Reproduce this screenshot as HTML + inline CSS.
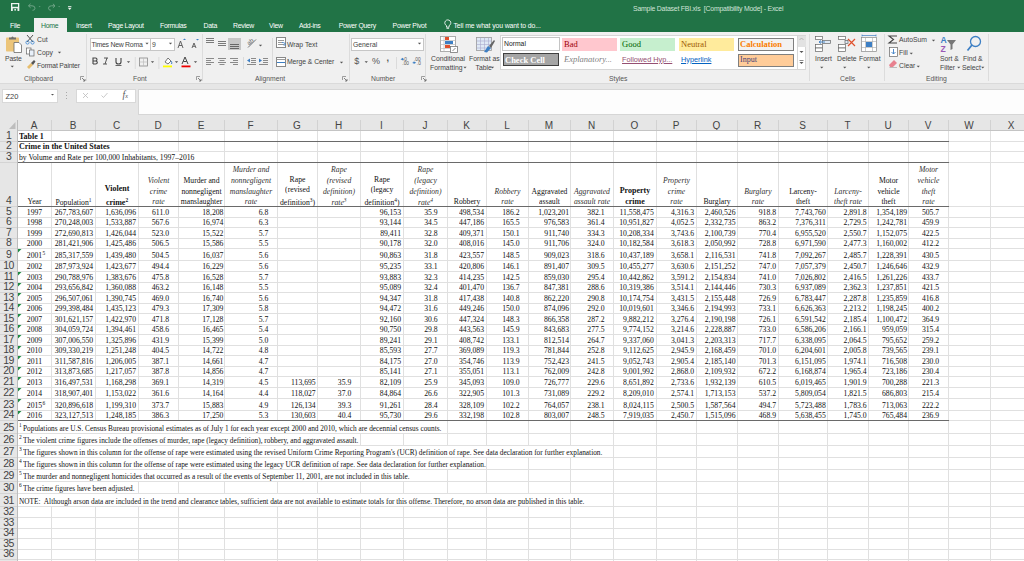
<!DOCTYPE html><html><head><meta charset="utf-8"><style>
html,body{margin:0;padding:0;width:1024px;height:561px;overflow:hidden;background:#fff;position:relative}
*{box-sizing:border-box}
.t{position:absolute;white-space:nowrap;font-family:"Liberation Sans",sans-serif;line-height:1}
.s{font-family:"Liberation Serif",serif}
.ui{font-family:"Liberation Sans",sans-serif;font-size:6.7px;color:#444}
svg{position:absolute;overflow:visible}
</style></head><body>
<div style="position:absolute;left:0px;top:0px;width:1024px;height:32px;background:#217346"></div>
<div style="position:absolute;left:34px;top:18px;width:33px;height:15px;background:#f0f0f0"></div>
<div class="t" style="left:10px;top:23px;font-size:6.9px;color:#ffffff;letter-spacing:-0.28px">File</div>
<div class="t" style="left:41px;top:23px;font-size:6.9px;color:#217346;letter-spacing:-0.28px">Home</div>
<div class="t" style="left:76px;top:23px;font-size:6.9px;color:#ffffff;letter-spacing:-0.28px">Insert</div>
<div class="t" style="left:108px;top:23px;font-size:6.9px;color:#ffffff;letter-spacing:-0.28px">Page Layout</div>
<div class="t" style="left:160px;top:23px;font-size:6.9px;color:#ffffff;letter-spacing:-0.28px">Formulas</div>
<div class="t" style="left:203.5px;top:23px;font-size:6.9px;color:#ffffff;letter-spacing:-0.28px">Data</div>
<div class="t" style="left:233px;top:23px;font-size:6.9px;color:#ffffff;letter-spacing:-0.28px">Review</div>
<div class="t" style="left:269px;top:23px;font-size:6.9px;color:#ffffff;letter-spacing:-0.28px">View</div>
<div class="t" style="left:299px;top:23px;font-size:6.9px;color:#ffffff;letter-spacing:-0.28px">Add-ins</div>
<div class="t" style="left:338.7px;top:23px;font-size:6.9px;color:#ffffff;letter-spacing:-0.28px">Power Query</div>
<div class="t" style="left:392.6px;top:23px;font-size:6.9px;color:#ffffff;letter-spacing:-0.28px">Power Pivot</div>
<div class="t" style="left:453.5px;top:23px;font-size:6.9px;color:#ffffff;letter-spacing:-0.12px">Tell me what you want to do...</div>
<div class="t" style="left:633px;top:6px;font-size:6.9px;color:#d2e3d8;letter-spacing:-0.21px">Sample Dataset FBI.xls&nbsp; [Compatibility Mode] - Excel</div>
<svg style="left:0;top:0" width="80" height="16">
<rect x="11" y="3" width="8.3" height="8" fill="#eef3f0"/>
<rect x="12.3" y="4.2" width="5.7" height="2.6" fill="#217346"/>
<rect x="12.8" y="8.3" width="4.7" height="2.7" fill="#217346"/>
<rect x="14.4" y="9" width="1.5" height="1.6" fill="#eef3f0"/>
<path d="M28.5 5.8 H32 Q35 5.8 35 8.2 Q35 10.3 32.5 10.3 M28.5 5.8 L30.6 3.8 M28.5 5.8 L30.6 7.8" fill="none" stroke="#6fa487" stroke-width="1"/>
<path d="M38.6 6.3 H40.6 L39.6 7.3 Z" fill="#6fa487"/>
<path d="M55 5.8 H51.5 Q48.5 5.8 48.5 8.2 Q48.5 10.3 51 10.3 M55 5.8 L52.9 3.8 M55 5.8 L52.9 7.8" fill="none" stroke="#6fa487" stroke-width="1"/>
<path d="M58.2 6.3 H60.2 L59.2 7.3 Z" fill="#6fa487"/>
<rect x="68" y="6.2" width="3.4" height="0.8" fill="#f2f2f2"/>
<path d="M67.8 7.8 H71.6 L69.7 9.9 Z" fill="#f2f2f2"/>
</svg>
<div style="position:absolute;left:0px;top:32px;width:1024px;height:51px;background:#f0f0f0"></div>
<div style="position:absolute;left:0px;top:83px;width:1024px;height:1px;background:#dadada"></div>
<div style="position:absolute;left:86px;top:34px;width:1px;height:47px;background:#dcdcdc"></div>
<div style="position:absolute;left:202px;top:34px;width:1px;height:47px;background:#dcdcdc"></div>
<div style="position:absolute;left:348.5px;top:34px;width:1px;height:47px;background:#dcdcdc"></div>
<div style="position:absolute;left:425px;top:34px;width:1px;height:47px;background:#dcdcdc"></div>
<div style="position:absolute;left:808.5px;top:34px;width:1px;height:47px;background:#dcdcdc"></div>
<div style="position:absolute;left:884px;top:34px;width:1px;height:47px;background:#dcdcdc"></div>
<div style="position:absolute;left:988px;top:34px;width:1px;height:47px;background:#dcdcdc"></div>
<div class="t" style="left:24px;top:75.5px;font-size:6.8px;color:#555">Clipboard</div>
<div class="t" style="left:133px;top:75.5px;font-size:6.8px;color:#555">Font</div>
<div class="t" style="left:255px;top:75.5px;font-size:6.8px;color:#555">Alignment</div>
<div class="t" style="left:371px;top:75.5px;font-size:6.8px;color:#555">Number</div>
<div class="t" style="left:609px;top:75.5px;font-size:6.8px;color:#555">Styles</div>
<div class="t" style="left:840px;top:75.5px;font-size:6.8px;color:#555">Cells</div>
<div class="t" style="left:926px;top:75.5px;font-size:6.8px;color:#555">Editing</div>
<svg style="left:80px;top:76px" width="6" height="6"><path d="M0.5 0.5 H4 M0.5 0.5 V4" stroke="#888" stroke-width="0.8" fill="none"/><path d="M2 2 L5 5 M5 3 V5 H3" stroke="#666" stroke-width="0.8" fill="none"/></svg>
<svg style="left:196px;top:76px" width="6" height="6"><path d="M0.5 0.5 H4 M0.5 0.5 V4" stroke="#888" stroke-width="0.8" fill="none"/><path d="M2 2 L5 5 M5 3 V5 H3" stroke="#666" stroke-width="0.8" fill="none"/></svg>
<svg style="left:342px;top:76px" width="6" height="6"><path d="M0.5 0.5 H4 M0.5 0.5 V4" stroke="#888" stroke-width="0.8" fill="none"/><path d="M2 2 L5 5 M5 3 V5 H3" stroke="#666" stroke-width="0.8" fill="none"/></svg>
<svg style="left:421px;top:76px" width="6" height="6"><path d="M0.5 0.5 H4 M0.5 0.5 V4" stroke="#888" stroke-width="0.8" fill="none"/><path d="M2 2 L5 5 M5 3 V5 H3" stroke="#666" stroke-width="0.8" fill="none"/></svg>
<svg style="left:0;top:32px" width="90" height="50">
<rect x="6" y="5.5" width="13" height="14" fill="#ecc57a" rx="0.8"/>
<path d="M9 7.5 V5.5 H11.3 Q12.5 3.5 13.7 5.5 H16 V7.5 Z" fill="#707070"/>
<path d="M14 10.5 H19 L21.5 13 V20.5 H14 Z" fill="#fff" stroke="#6b6b6b" stroke-width="0.8"/>
<path d="M27 3 L33 10 M33 3 L27 10" stroke="#555" stroke-width="1"/>
<circle cx="27.5" cy="10.5" r="1.6" fill="none" stroke="#4a8fd6" stroke-width="0.9"/>
<circle cx="32.5" cy="10.5" r="1.6" fill="none" stroke="#4a8fd6" stroke-width="0.9"/>
<rect x="26.5" y="16" width="4.5" height="6" fill="#fff" stroke="#666" stroke-width="0.7"/>
<rect x="29.5" y="18" width="4.5" height="6" fill="#e8f0fa" stroke="#666" stroke-width="0.7"/>
<path d="M27 35 L31 31 L33 33 L29 37 Z" fill="#e6bd6e"/>
<path d="M31 31 L34 28 L35.5 29.5 L33 33" fill="#555"/>
<path d="M57.90 19.70 L61.10 19.70 L59.50 21.50 Z" fill="#555"/>
<path d="M10.65 33.70 L13.85 33.70 L12.25 35.50 Z" fill="#555"/>
</svg>
<div class="t" style="left:5px;top:56px;font-size:6.8px;color:#444;letter-spacing:-0.15px">Paste</div>
<div class="t" style="left:37px;top:37px;font-size:6.8px;color:#444">Cut</div>
<div class="t" style="left:37px;top:50px;font-size:6.8px;color:#444">Copy</div>
<div class="t" style="left:37px;top:63px;font-size:6.8px;color:#444;letter-spacing:-0.15px">Format Painter</div>
<div style="position:absolute;left:89.5px;top:38px;width:61px;height:12.5px;background:#fff;border:1px solid #c6c6c6"></div>
<div style="position:absolute;left:150px;top:38px;width:24.5px;height:12.5px;background:#fff;border:1px solid #c6c6c6"></div>
<div class="t" style="left:91.5px;top:41.8px;font-size:6.9px;color:#444;letter-spacing:-0.25px">Times New Roma</div>
<div class="t" style="left:152px;top:41.8px;font-size:6.9px;color:#444">9</div>
<svg style="left:0;top:32px" width="210" height="50">
<path d="M145.40 10.70 L148.60 10.70 L147.00 12.50 Z" fill="#555"/>
<path d="M168.90 10.70 L172.10 10.70 L170.50 12.50 Z" fill="#555"/>
<path d="M93 32 V26 H95.5 Q97 26 97 27.5 Q97 29 95.5 29 H93 M95.5 29 Q97.3 29 97.3 30.5 Q97.3 32 95.5 32 H93" fill="none" stroke="#444" stroke-width="1.1"/>
<path d="M105 32 L107 26 M104 26 H108 M103 32 H107" stroke="#444" stroke-width="0.9"/>
<path d="M116 26 V30 Q116 32 118.5 32 Q121 32 121 30 V26" fill="none" stroke="#444" stroke-width="1.1"/>
<rect x="115.5" y="33" width="6" height="0.8" fill="#444"/>
<path d="M126.90 29.20 L130.10 29.20 L128.50 31.00 Z" fill="#555"/>
<rect x="134.8" y="25" width="0.8" height="12" fill="#d6d6d6"/>
<rect x="139.5" y="26" width="8" height="8" fill="none" stroke="#888" stroke-width="0.8"/>
<path d="M143.5 26 V34 M139.5 30 H147.5" stroke="#bbb" stroke-width="0.7"/>
<path d="M150.90 29.20 L154.10 29.20 L152.50 31.00 Z" fill="#555"/>
<rect x="158.5" y="25" width="0.8" height="12" fill="#d6d6d6"/>
<path d="M165 30 L168 26 L171 29 L168 32 Z" fill="#fff" stroke="#555" stroke-width="0.8"/>
<path d="M171 29 Q172.5 31 171.5 32" fill="none" stroke="#3d7fc4" stroke-width="1"/>
<rect x="163" y="33.5" width="9" height="1.8" fill="#ffff00"/>
<path d="M174.90 29.20 L178.10 29.20 L176.50 31.00 Z" fill="#555"/>
<path d="M182 32 L185 25 L188 32 M183.3 29.5 H186.7" fill="none" stroke="#444" stroke-width="1"/>
<rect x="181.5" y="33.5" width="9" height="1.8" fill="#e00"/>
<path d="M193.90 29.20 L197.10 29.20 L195.50 31.00 Z" fill="#555"/>
<path d="M178 16 L180.5 9 L183 16 M179 13.5 H182" fill="none" stroke="#555" stroke-width="0.9"/>
<path d="M183 8 L184.5 6.5 L186 8 Z" fill="#3d7fc4"/>
<path d="M192 16 L194 11 L196 16 M192.8 14.3 H195.2" fill="none" stroke="#555" stroke-width="0.9"/>
<path d="M196 7 L199 7 L197.5 8.5 Z" fill="#3d7fc4"/>
</svg>
<svg style="left:0;top:32px" width="350" height="50">
<g stroke="#7a7a7a" stroke-width="1">
<path d="M206 6.5 H214 M206 8.5 H214 M206 10.5 H214"/>
<path d="M218 9.5 H226 M218 11.5 H226 M218 13.5 H226"/>
</g>
<rect x="228" y="6" width="13" height="12" fill="#c6c6c6"/>
<path d="M230 12.5 H239 M230 14.5 H239 M230 16.5 H239" stroke="#666" stroke-width="1"/>
<path d="M248 15.5 L256 7.5" stroke="#666" stroke-width="0.9" fill="none"/>
<text x="247" y="12" font-family="Liberation Sans" font-size="6" fill="#666" transform="rotate(-40 250 10)">ab</text>
<path d="M258.9 12.7 L262.1 12.7 L260.5 14.5 Z" fill="#555"/>
<g stroke="#8a8a8a" stroke-width="1">
<path d="M206 26.5 H214 M206 28.5 H211 M206 30.5 H214 M206 32.5 H211"/>
<path d="M218 26.5 H226 M219.5 28.5 H224.5 M218 30.5 H226 M219.5 32.5 H224.5"/>
<path d="M230 26.5 H238 M233 28.5 H238 M230 30.5 H238 M233 32.5 H238"/>
</g>
<rect x="243" y="25" width="1" height="12" fill="#dadada"/>
<path d="M251 26.5 H256 M251 28.5 H256 M251 30.5 H256 M247 32.5 H256" stroke="#8a8a8a" stroke-width="1"/>
<path d="M247 28.5 L250 26.5 L250 30.5 Z" fill="#3d7fc4"/>
<path d="M263 26.5 H268 M263 28.5 H268 M263 30.5 H268 M259 32.5 H268" stroke="#8a8a8a" stroke-width="1"/>
<path d="M262 28.5 L259 26.5 L259 30.5 Z" fill="#3d7fc4"/>
<rect x="272" y="6" width="1" height="32" fill="#dadada"/>
<rect x="276.5" y="5.5" width="9" height="10" fill="#fff" stroke="#888" stroke-width="1"/>
<path d="M278 8.5 H284 M278 10.5 H282 M278 12.5 H284" stroke="#999" stroke-width="1"/>
<path d="M282 10.5 Q286 10.5 285 13 L283.5 13" stroke="#3d7fc4" fill="none" stroke-width="0.9"/>
<rect x="276.5" y="25.5" width="9" height="9" fill="#fff" stroke="#888" stroke-width="1"/>
<path d="M277 30.5 H285" stroke="#3d7fc4" stroke-width="1"/>
<path d="M276.5 27.5 H285.5" stroke="#999" stroke-width="1"/>
<path d="M339.9 29.7 L343.1 29.7 L341.5 31.5 Z" fill="#555"/>
</svg>
<div class="t" style="left:287px;top:41.5px;font-size:6.8px;color:#444">Wrap Text</div>
<div class="t" style="left:287px;top:58.5px;font-size:6.8px;color:#444;letter-spacing:-0.05px">Merge &amp; Center</div>
<div style="position:absolute;left:351px;top:38px;width:73px;height:12.5px;background:#fff;border:1px solid #c6c6c6"></div>
<div class="t" style="left:353px;top:41.7px;font-size:6.8px;color:#444">General</div>
<svg style="left:0;top:32px" width="430" height="50">
<path d="M417.90 10.70 L421.10 10.70 L419.50 12.50 Z" fill="#555"/>
<path d="M364.65 29.20 L367.85 29.20 L366.25 31.00 Z" fill="#555"/>
<rect x="396" y="25" width="0.8" height="12" fill="#d6d6d6"/>
</svg>
<div class="t" style="left:354.3px;top:56.9px;font-size:9px;color:#555">$</div>
<div class="t" style="left:372px;top:57px;font-size:9px;color:#555">%</div>
<div class="t" style="left:386.5px;top:54px;font-size:9px;color:#555;font-weight:bold">,</div>
<svg style="left:0;top:0" width="430" height="80">
<g font-family="Liberation Sans" font-size="4.8" fill="#555">
<text x="403" y="60.5">.0</text><text x="402.3" y="64.8">.00</text>
<text x="414" y="60.5">.00</text><text x="416.8" y="64.8">.0</text>
</g>
<path d="M400.5 59.2 L403 57.8 V60.6 Z" fill="#3d7fc4"/><rect x="402.5" y="58.7" width="1.5" height="1" fill="#3d7fc4"/>
<path d="M416.2 62.7 L413.7 61.3 V64.1 Z" fill="#3d7fc4"/><rect x="412.7" y="62.2" width="1.5" height="1" fill="#3d7fc4"/>
<path d="M446.5 25.6 A3 3 0 1 1 449.1 25.6 V27.2 H446.5 Z" fill="none" stroke="#fff" stroke-width="0.85"/>
<rect x="446.5" y="27.9" width="2.6" height="0.8" fill="#fff"/>
</svg>
<svg style="left:0;top:32px" width="520" height="50">
<rect x="440.5" y="4.5" width="15" height="15" fill="#fff" stroke="#999" stroke-width="0.8"/>
<path d="M440.5 8.5 H455.5 M440.5 12.5 H455.5 M440.5 16.5 H455.5 M444 4.5 V19.5" stroke="#bbb" stroke-width="0.7"/>
<rect x="445" y="5" width="4" height="3" fill="#e0502c"/>
<rect x="445" y="9" width="8" height="3" fill="#3d7fc4"/>
<rect x="445" y="13" width="5" height="3" fill="#e0502c"/>
<rect x="450.5" y="14.5" width="7" height="6" fill="#fff" stroke="#777" stroke-width="0.8"/>
<path d="M452.5 19 L455.5 16" stroke="#555" stroke-width="0.7"/>
<rect x="476.5" y="5.5" width="15" height="13" fill="#dfe9f5" stroke="#999" stroke-width="0.8"/>
<path d="M476.5 9 H491.5 M476.5 12.5 H491.5 M476.5 16 H491.5 M480.5 5.5 V18.5 M484.5 5.5 V18.5 M488.5 5.5 V18.5" stroke="#aac" stroke-width="0.6"/>
<path d="M484 20 L488 14 L491 16 L487 20.5 Z" fill="#3d7fc4"/>
<path d="M489 14 L494 8 L495 9 L491 16" fill="#666"/>
<path d="M463.40 34.70 L466.60 34.70 L465.00 36.50 Z" fill="#555"/>
<path d="M490.90 34.70 L494.10 34.70 L492.50 36.50 Z" fill="#555"/>
</svg>
<div class="t" style="left:431px;top:56px;font-size:6.8px;color:#444">Conditional</div>
<div class="t" style="left:430px;top:65px;font-size:6.8px;color:#444">Formatting</div>
<div class="t" style="left:469px;top:56px;font-size:6.8px;color:#444">Format as</div>
<div class="t" style="left:475.5px;top:65px;font-size:6.8px;color:#444">Table</div>
<div style="position:absolute;left:500px;top:35px;width:306px;height:35px;background:#fff;border:1px solid #d6d6d6"></div>
<div style="position:absolute;left:502px;top:37px;width:57.5px;height:14px;background:#fff;border:1px solid #c4c4c4"></div>
<div class="t" style="left:504px;top:39.5px;font-family:'Liberation Serif',serif;font-size:8.5px;color:#222;font-family:'Liberation Sans',sans-serif;font-size:6.8px;top:40.5px">Normal</div>
<div style="position:absolute;left:562px;top:38px;width:55px;height:12.5px;background:#ffc7ce"></div>
<div class="t" style="left:564px;top:39.7px;font-family:'Liberation Serif',serif;font-size:8.5px;color:#9c0006">Bad</div>
<div style="position:absolute;left:620px;top:38px;width:55px;height:12.5px;background:#c6efce"></div>
<div class="t" style="left:622px;top:39.9px;font-family:'Liberation Serif',serif;font-size:8.5px;color:#006100">Good</div>
<div style="position:absolute;left:679px;top:38px;width:55px;height:12.5px;background:#ffeb9c"></div>
<div class="t" style="left:681px;top:40.3px;font-family:'Liberation Serif',serif;font-size:8.5px;color:#9c5700">Neutral</div>
<div style="position:absolute;left:738px;top:38px;width:56px;height:13px;background:#f2f2f2;border:1px solid #7f7f7f"></div>
<div class="t" style="left:740px;top:40.1px;font-family:'Liberation Serif',serif;font-size:8.5px;color:#fa7d00;font-weight:bold">Calculation</div>
<div style="position:absolute;left:503px;top:53px;width:55.5px;height:13px;background:#a5a5a5;border:1.5px solid #3f3f3f"></div>
<div class="t" style="left:505px;top:55.5px;font-family:'Liberation Serif',serif;font-size:8.5px;color:#fff;font-weight:bold">Check Cell</div>
<div style="position:absolute;left:562px;top:53px;width:55px;height:13px;"></div>
<div class="t" style="left:564px;top:54.5px;font-family:'Liberation Serif',serif;font-size:8.5px;color:#7f7f7f;font-style:italic">Explanatory...</div>
<div style="position:absolute;left:620px;top:53px;width:55px;height:13px;"></div>
<div class="t" style="left:622px;top:55.5px;font-family:'Liberation Serif',serif;font-size:8.5px;color:#954f72;text-decoration:underline;font-family:'Liberation Sans',sans-serif;font-size:7.3px">Followed Hyp...</div>
<div style="position:absolute;left:679px;top:53px;width:55px;height:13px;"></div>
<div class="t" style="left:681px;top:55.5px;font-family:'Liberation Serif',serif;font-size:8.5px;color:#0563c1;text-decoration:underline;font-family:'Liberation Sans',sans-serif;font-size:7.3px">Hyperlink</div>
<div style="position:absolute;left:738px;top:54px;width:56px;height:12.5px;background:#ffcc99;border:1px solid #7f7f7f"></div>
<div class="t" style="left:740px;top:56.2px;font-family:'Liberation Serif',serif;font-size:8.5px;color:#3f3f76;font-size:8px">Input</div>
<div style="position:absolute;left:797px;top:35px;width:9px;height:35px;background:#fff;border:1px solid #d6d6d6"></div>
<div style="position:absolute;left:797.5px;top:35.5px;width:8px;height:11px;background:#e2e2e2"></div>
<svg style="left:0;top:32px" width="810" height="50">
<path d="M799.5 8 L801.5 6 L803.5 8" fill="none" stroke="#aaa" stroke-width="0.8"/>
<path d="M799.5 19 L803.5 19 L801.5 21 Z" fill="#555"/>
<path d="M799.5 28.5 H803.5" stroke="#555" stroke-width="0.7"/>
<path d="M799.5 30 L803.5 30 L801.5 32 Z" fill="#555"/>
</svg>
<svg style="left:0;top:32px" width="990" height="50">
<g fill="#fff" stroke="#666" stroke-width="0.7">
<rect x="815.5" y="4.5" width="7" height="3"/><rect x="815.5" y="12.5" width="7" height="3.5"/><rect x="815.5" y="16" width="7" height="3.5"/>
<rect x="822.5" y="8.5" width="8" height="3" fill="#dfe9f5"/>
</g>
<path d="M825 10 H819 M821 8.5 L819 10 L821 11.5" stroke="#3d7fc4" stroke-width="0.9" fill="none"/>
<g fill="#fff" stroke="#666" stroke-width="0.7">
<rect x="838.5" y="4.5" width="7" height="3"/><rect x="838.5" y="12.5" width="7" height="3.5"/><rect x="838.5" y="16" width="7" height="3.5"/>
<rect x="845" y="8.5" width="3" height="3" fill="#dfe9f5"/>
</g>
<path d="M848 7 L855 14 M855 7 L848 14" stroke="#e0502c" stroke-width="1.2"/>
<rect x="861.5" y="5.5" width="15" height="14" fill="#fff" stroke="#888" stroke-width="0.7"/>
<path d="M861.5 9.5 H876.5 M861.5 15.5 H876.5 M865.5 5.5 V19.5 M872.5 5.5 V19.5" stroke="#aaa" stroke-width="0.6"/>
<rect x="866" y="10" width="6" height="5" fill="#3d7fc4"/>
<path d="M862 3.5 H876 M862 2.5 V4.5 M876 2.5 V4.5" stroke="#3d7fc4" stroke-width="0.7"/>
<path d="M820.15 34.70 L823.35 34.70 L821.75 36.50 Z" fill="#555"/>
<path d="M843.15 34.70 L846.35 34.70 L844.75 36.50 Z" fill="#555"/>
<path d="M867.15 34.70 L870.35 34.70 L868.75 36.50 Z" fill="#555"/>
</svg>
<div class="t" style="left:815px;top:56px;font-size:6.8px;color:#444">Insert</div>
<div class="t" style="left:837px;top:56px;font-size:6.8px;color:#444">Delete</div>
<div class="t" style="left:859px;top:56px;font-size:6.8px;color:#444">Format</div>
<svg style="left:0;top:32px" width="1000" height="50">
<path d="M897 4 H889 L893.5 7.5 L889 11 H897" fill="none" stroke="#444" stroke-width="1.1"/>
<path d="M931.90 7.70 L935.10 7.70 L933.50 9.50 Z" fill="#555"/>
<rect x="889.5" y="15.5" width="8" height="9" fill="#fff" stroke="#666" stroke-width="0.7"/>
<path d="M893.5 17 V22 M891.5 20 L893.5 22 L895.5 20" stroke="#3d7fc4" stroke-width="0.9" fill="none"/>
<path d="M909.65 20.70 L912.85 20.70 L911.25 22.50 Z" fill="#555"/>
<path d="M889 33 L894 28 L897 31 L893 35 H890 Z" fill="#e8818f"/>
<path d="M889.5 35.5 H897" stroke="#999" stroke-width="0.6"/>
<path d="M916.65 33.70 L919.85 33.70 L918.25 35.50 Z" fill="#555"/>
<text x="940.5" y="10.8" font-family="Liberation Sans" font-size="8.6" font-weight="bold" fill="#3d7fc4">A</text>
<text x="940.5" y="19.5" font-family="Liberation Sans" font-size="8.6" font-weight="bold" fill="#9b59b6">Z</text>
<path d="M947 8 H956 L952.5 12.5 V17 L950.5 18 V12.5 Z" fill="#777"/>
<circle cx="975.5" cy="9.5" r="5" fill="none" stroke="#3d7fc4" stroke-width="1.3"/>
<path d="M972 13 L967.5 18.5" stroke="#3d7fc4" stroke-width="1.8"/>
<path d="M957.15 34.70 L960.35 34.70 L958.75 36.50 Z" fill="#555"/>
<path d="M981.15 34.70 L984.35 34.70 L982.75 36.50 Z" fill="#555"/>
</svg>
<div class="t" style="left:899px;top:37px;font-size:6.8px;color:#444">AutoSum</div>
<div class="t" style="left:899px;top:50px;font-size:6.8px;color:#444">Fill</div>
<div class="t" style="left:899px;top:62.7px;font-size:6.8px;color:#444">Clear</div>
<div class="t" style="left:940px;top:56px;font-size:6.8px;color:#444">Sort &amp;</div>
<div class="t" style="left:940px;top:65.3px;font-size:6.8px;color:#444">Filter</div>
<div class="t" style="left:963px;top:56px;font-size:6.8px;color:#444">Find &amp;</div>
<div class="t" style="left:962px;top:65.3px;font-size:6.8px;color:#444">Select</div>
<div style="position:absolute;left:0px;top:84px;width:1024px;height:46px;background:#e6e6e6"></div>
<div style="position:absolute;left:2px;top:89px;width:56px;height:14px;background:#fff;border:1px solid #d8d8d8"></div>
<div class="t" style="left:5.5px;top:92.5px;font-size:7.5px;color:#444">Z20</div>
<svg style="left:0;top:84px" width="140" height="30">
<path d="M51 10 L54 10 L52.5 11.6 Z" fill="#555"/>
<path d="M66.5 8 V9 M66.5 11 V12 M66.5 14 V15" stroke="#999" stroke-width="0.8"/>
<path d="M83 9 L88 14 M88 9 L83 14" stroke="#bbb" stroke-width="0.8"/>
<path d="M101.5 11.5 L103.5 13.5 L107.5 9" stroke="#bbb" stroke-width="0.8" fill="none"/>
</svg>
<div style="position:absolute;left:76px;top:89px;width:59.5px;height:14px;background:#fff;border:1px solid #d8d8d8"></div>
<div class="t" style="left:122.5px;top:90.5px;font-family:'Liberation Serif',serif;font-size:9.5px;color:#555"><i>f</i><i style="font-size:6px">x</i></div>
<svg style="left:0;top:84px" width="140" height="30">
<path d="M83 9 L88 14 M88 9 L83 14" stroke="#bbb" stroke-width="0.8"/>
<path d="M101.5 11.5 L103.5 13.5 L107.5 9" stroke="#bbb" stroke-width="0.8" fill="none"/>
</svg>
<div style="position:absolute;left:138px;top:89px;width:890px;height:26px;background:#fdfdfd;border:1px solid #d6d6d6"></div>
<div style="position:absolute;left:17px;top:130px;width:1007px;height:431px;background:#fff"></div>
<svg style="left:0;top:118px" width="18" height="13"><path d="M15.5 4 V11 H9 Z" fill="#bdbdbd"/></svg>
<div class="t" style="left:24.0px;top:121.3px;font-size:10px;color:#444;width:20px;text-align:center">A</div>
<div style="position:absolute;left:17px;top:120px;width:1px;height:10px;background:#d2d2d2"></div>
<div class="t" style="left:63.0px;top:121.3px;font-size:10px;color:#444;width:20px;text-align:center">B</div>
<div style="position:absolute;left:51px;top:120px;width:1px;height:10px;background:#d2d2d2"></div>
<div class="t" style="left:106.5px;top:121.3px;font-size:10px;color:#444;width:20px;text-align:center">C</div>
<div style="position:absolute;left:95px;top:120px;width:1px;height:10px;background:#d2d2d2"></div>
<div class="t" style="left:148.0px;top:121.3px;font-size:10px;color:#444;width:20px;text-align:center">D</div>
<div style="position:absolute;left:138px;top:120px;width:1px;height:10px;background:#d2d2d2"></div>
<div class="t" style="left:191.0px;top:121.3px;font-size:10px;color:#444;width:20px;text-align:center">E</div>
<div style="position:absolute;left:178px;top:120px;width:1px;height:10px;background:#d2d2d2"></div>
<div class="t" style="left:240.5px;top:121.3px;font-size:10px;color:#444;width:20px;text-align:center">F</div>
<div style="position:absolute;left:224px;top:120px;width:1px;height:10px;background:#d2d2d2"></div>
<div class="t" style="left:287.0px;top:121.3px;font-size:10px;color:#444;width:20px;text-align:center">G</div>
<div style="position:absolute;left:277px;top:120px;width:1px;height:10px;background:#d2d2d2"></div>
<div class="t" style="left:328.5px;top:121.3px;font-size:10px;color:#444;width:20px;text-align:center">H</div>
<div style="position:absolute;left:317px;top:120px;width:1px;height:10px;background:#d2d2d2"></div>
<div class="t" style="left:371.5px;top:121.3px;font-size:10px;color:#444;width:20px;text-align:center">I</div>
<div style="position:absolute;left:360px;top:120px;width:1px;height:10px;background:#d2d2d2"></div>
<div class="t" style="left:415.0px;top:121.3px;font-size:10px;color:#444;width:20px;text-align:center">J</div>
<div style="position:absolute;left:403px;top:120px;width:1px;height:10px;background:#d2d2d2"></div>
<div class="t" style="left:456.5px;top:121.3px;font-size:10px;color:#444;width:20px;text-align:center">K</div>
<div style="position:absolute;left:447px;top:120px;width:1px;height:10px;background:#d2d2d2"></div>
<div class="t" style="left:497.0px;top:121.3px;font-size:10px;color:#444;width:20px;text-align:center">L</div>
<div style="position:absolute;left:486px;top:120px;width:1px;height:10px;background:#d2d2d2"></div>
<div class="t" style="left:539.0px;top:121.3px;font-size:10px;color:#444;width:20px;text-align:center">M</div>
<div style="position:absolute;left:528px;top:120px;width:1px;height:10px;background:#d2d2d2"></div>
<div class="t" style="left:581.5px;top:121.3px;font-size:10px;color:#444;width:20px;text-align:center">N</div>
<div style="position:absolute;left:570px;top:120px;width:1px;height:10px;background:#d2d2d2"></div>
<div class="t" style="left:624.5px;top:121.3px;font-size:10px;color:#444;width:20px;text-align:center">O</div>
<div style="position:absolute;left:613px;top:120px;width:1px;height:10px;background:#d2d2d2"></div>
<div class="t" style="left:666.0px;top:121.3px;font-size:10px;color:#444;width:20px;text-align:center">P</div>
<div style="position:absolute;left:656px;top:120px;width:1px;height:10px;background:#d2d2d2"></div>
<div class="t" style="left:706.5px;top:121.3px;font-size:10px;color:#444;width:20px;text-align:center">Q</div>
<div style="position:absolute;left:696px;top:120px;width:1px;height:10px;background:#d2d2d2"></div>
<div class="t" style="left:747.5px;top:121.3px;font-size:10px;color:#444;width:20px;text-align:center">R</div>
<div style="position:absolute;left:737px;top:120px;width:1px;height:10px;background:#d2d2d2"></div>
<div class="t" style="left:792.5px;top:121.3px;font-size:10px;color:#444;width:20px;text-align:center">S</div>
<div style="position:absolute;left:778px;top:120px;width:1px;height:10px;background:#d2d2d2"></div>
<div class="t" style="left:837.5px;top:121.3px;font-size:10px;color:#444;width:20px;text-align:center">T</div>
<div style="position:absolute;left:827px;top:120px;width:1px;height:10px;background:#d2d2d2"></div>
<div class="t" style="left:878.0px;top:121.3px;font-size:10px;color:#444;width:20px;text-align:center">U</div>
<div style="position:absolute;left:868px;top:120px;width:1px;height:10px;background:#d2d2d2"></div>
<div class="t" style="left:918.0px;top:121.3px;font-size:10px;color:#444;width:20px;text-align:center">V</div>
<div style="position:absolute;left:908px;top:120px;width:1px;height:10px;background:#d2d2d2"></div>
<div class="t" style="left:959.0px;top:121.3px;font-size:10px;color:#444;width:20px;text-align:center">W</div>
<div style="position:absolute;left:948px;top:120px;width:1px;height:10px;background:#d2d2d2"></div>
<div class="t" style="left:1001.0px;top:121.3px;font-size:10px;color:#444;width:20px;text-align:center">X</div>
<div style="position:absolute;left:990px;top:120px;width:1px;height:10px;background:#d2d2d2"></div>
<div style="position:absolute;left:0px;top:130px;width:1024px;height:1px;background:#c4c4c4"></div>
<div style="position:absolute;left:0px;top:130px;width:17px;height:431px;background:#e6e6e6"></div>
<div style="position:absolute;left:17px;top:120px;width:1px;height:441px;background:#bcbcbc"></div>
<div class="t" style="left:-1px;top:129.8px;font-size:10.5px;color:#444;width:19px;text-align:center;letter-spacing:-0.7px">1</div>
<div style="position:absolute;left:0px;top:141px;width:17px;height:1px;background:#d4d4d4"></div>
<div class="t" style="left:-1px;top:139.8px;font-size:10.5px;color:#444;width:19px;text-align:center;letter-spacing:-0.7px">2</div>
<div style="position:absolute;left:0px;top:151px;width:17px;height:1px;background:#d4d4d4"></div>
<div class="t" style="left:-1px;top:150.8px;font-size:10.5px;color:#444;width:19px;text-align:center;letter-spacing:-0.7px">3</div>
<div style="position:absolute;left:0px;top:162px;width:17px;height:1px;background:#d4d4d4"></div>
<div class="t" style="left:-1px;top:194.8px;font-size:10.5px;color:#444;width:19px;text-align:center;letter-spacing:-0.7px">4</div>
<div style="position:absolute;left:0px;top:206px;width:17px;height:1px;background:#d4d4d4"></div>
<div class="t" style="left:-1px;top:205.8px;font-size:10.5px;color:#444;width:19px;text-align:center;letter-spacing:-0.7px">5</div>
<div style="position:absolute;left:0px;top:217px;width:17px;height:1px;background:#d4d4d4"></div>
<div class="t" style="left:-1px;top:215.8px;font-size:10.5px;color:#444;width:19px;text-align:center;letter-spacing:-0.7px">6</div>
<div style="position:absolute;left:0px;top:227px;width:17px;height:1px;background:#d4d4d4"></div>
<div class="t" style="left:-1px;top:226.8px;font-size:10.5px;color:#444;width:19px;text-align:center;letter-spacing:-0.7px">7</div>
<div style="position:absolute;left:0px;top:238px;width:17px;height:1px;background:#d4d4d4"></div>
<div class="t" style="left:-1px;top:236.8px;font-size:10.5px;color:#444;width:19px;text-align:center;letter-spacing:-0.7px">8</div>
<div style="position:absolute;left:0px;top:248px;width:17px;height:1px;background:#d4d4d4"></div>
<div class="t" style="left:-1px;top:248.8px;font-size:10.5px;color:#444;width:19px;text-align:center;letter-spacing:-0.7px">9</div>
<div style="position:absolute;left:0px;top:260px;width:17px;height:1px;background:#d4d4d4"></div>
<div class="t" style="left:-1px;top:259.8px;font-size:10.5px;color:#444;width:19px;text-align:center;letter-spacing:-0.7px">10</div>
<div style="position:absolute;left:0px;top:271px;width:17px;height:1px;background:#d4d4d4"></div>
<div class="t" style="left:-1px;top:270.8px;font-size:10.5px;color:#444;width:19px;text-align:center;letter-spacing:-0.7px">11</div>
<div style="position:absolute;left:0px;top:282px;width:17px;height:1px;background:#d4d4d4"></div>
<div class="t" style="left:-1px;top:280.8px;font-size:10.5px;color:#444;width:19px;text-align:center;letter-spacing:-0.7px">12</div>
<div style="position:absolute;left:0px;top:292px;width:17px;height:1px;background:#d4d4d4"></div>
<div class="t" style="left:-1px;top:291.8px;font-size:10.5px;color:#444;width:19px;text-align:center;letter-spacing:-0.7px">13</div>
<div style="position:absolute;left:0px;top:303px;width:17px;height:1px;background:#d4d4d4"></div>
<div class="t" style="left:-1px;top:301.8px;font-size:10.5px;color:#444;width:19px;text-align:center;letter-spacing:-0.7px">14</div>
<div style="position:absolute;left:0px;top:313px;width:17px;height:1px;background:#d4d4d4"></div>
<div class="t" style="left:-1px;top:312.8px;font-size:10.5px;color:#444;width:19px;text-align:center;letter-spacing:-0.7px">15</div>
<div style="position:absolute;left:0px;top:324px;width:17px;height:1px;background:#d4d4d4"></div>
<div class="t" style="left:-1px;top:322.8px;font-size:10.5px;color:#444;width:19px;text-align:center;letter-spacing:-0.7px">16</div>
<div style="position:absolute;left:0px;top:334px;width:17px;height:1px;background:#d4d4d4"></div>
<div class="t" style="left:-1px;top:333.8px;font-size:10.5px;color:#444;width:19px;text-align:center;letter-spacing:-0.7px">17</div>
<div style="position:absolute;left:0px;top:345px;width:17px;height:1px;background:#d4d4d4"></div>
<div class="t" style="left:-1px;top:343.8px;font-size:10.5px;color:#444;width:19px;text-align:center;letter-spacing:-0.7px">18</div>
<div style="position:absolute;left:0px;top:355px;width:17px;height:1px;background:#d4d4d4"></div>
<div class="t" style="left:-1px;top:354.8px;font-size:10.5px;color:#444;width:19px;text-align:center;letter-spacing:-0.7px">19</div>
<div style="position:absolute;left:0px;top:366px;width:17px;height:1px;background:#d4d4d4"></div>
<div class="t" style="left:-1px;top:364.8px;font-size:10.5px;color:#444;width:19px;text-align:center;letter-spacing:-0.7px">20</div>
<div style="position:absolute;left:0px;top:376px;width:17px;height:1px;background:#d4d4d4"></div>
<div class="t" style="left:-1px;top:375.8px;font-size:10.5px;color:#444;width:19px;text-align:center;letter-spacing:-0.7px">21</div>
<div style="position:absolute;left:0px;top:387px;width:17px;height:1px;background:#d4d4d4"></div>
<div class="t" style="left:-1px;top:386.8px;font-size:10.5px;color:#444;width:19px;text-align:center;letter-spacing:-0.7px">22</div>
<div style="position:absolute;left:0px;top:398px;width:17px;height:1px;background:#d4d4d4"></div>
<div class="t" style="left:-1px;top:398.8px;font-size:10.5px;color:#444;width:19px;text-align:center;letter-spacing:-0.7px">23</div>
<div style="position:absolute;left:0px;top:410px;width:17px;height:1px;background:#d4d4d4"></div>
<div class="t" style="left:-1px;top:408.8px;font-size:10.5px;color:#444;width:19px;text-align:center;letter-spacing:-0.7px">24</div>
<div style="position:absolute;left:0px;top:420px;width:17px;height:1px;background:#d4d4d4"></div>
<div class="t" style="left:-1px;top:421.8px;font-size:10.5px;color:#444;width:19px;text-align:center;letter-spacing:-0.7px">25</div>
<div style="position:absolute;left:0px;top:433px;width:17px;height:1px;background:#d4d4d4"></div>
<div class="t" style="left:-1px;top:433.8px;font-size:10.5px;color:#444;width:19px;text-align:center;letter-spacing:-0.7px">26</div>
<div style="position:absolute;left:0px;top:445px;width:17px;height:1px;background:#d4d4d4"></div>
<div class="t" style="left:-1px;top:445.8px;font-size:10.5px;color:#444;width:19px;text-align:center;letter-spacing:-0.7px">27</div>
<div style="position:absolute;left:0px;top:457px;width:17px;height:1px;background:#d4d4d4"></div>
<div class="t" style="left:-1px;top:457.8px;font-size:10.5px;color:#444;width:19px;text-align:center;letter-spacing:-0.7px">28</div>
<div style="position:absolute;left:0px;top:469px;width:17px;height:1px;background:#d4d4d4"></div>
<div class="t" style="left:-1px;top:469.8px;font-size:10.5px;color:#444;width:19px;text-align:center;letter-spacing:-0.7px">29</div>
<div style="position:absolute;left:0px;top:481px;width:17px;height:1px;background:#d4d4d4"></div>
<div class="t" style="left:-1px;top:481.8px;font-size:10.5px;color:#444;width:19px;text-align:center;letter-spacing:-0.7px">30</div>
<div style="position:absolute;left:0px;top:493px;width:17px;height:1px;background:#d4d4d4"></div>
<div class="t" style="left:-1px;top:494.8px;font-size:10.5px;color:#444;width:19px;text-align:center;letter-spacing:-0.7px">31</div>
<div style="position:absolute;left:0px;top:506px;width:17px;height:1px;background:#d4d4d4"></div>
<div class="t" style="left:-1px;top:505.8px;font-size:10.5px;color:#444;width:19px;text-align:center;letter-spacing:-0.7px">32</div>
<div style="position:absolute;left:0px;top:517px;width:17px;height:1px;background:#d4d4d4"></div>
<div class="t" style="left:-1px;top:516.8px;font-size:10.5px;color:#444;width:19px;text-align:center;letter-spacing:-0.7px">33</div>
<div style="position:absolute;left:0px;top:528px;width:17px;height:1px;background:#d4d4d4"></div>
<div class="t" style="left:-1px;top:526.8px;font-size:10.5px;color:#444;width:19px;text-align:center;letter-spacing:-0.7px">34</div>
<div style="position:absolute;left:0px;top:538px;width:17px;height:1px;background:#d4d4d4"></div>
<div class="t" style="left:-1px;top:537.8px;font-size:10.5px;color:#444;width:19px;text-align:center;letter-spacing:-0.7px">35</div>
<div style="position:absolute;left:0px;top:549px;width:17px;height:1px;background:#d4d4d4"></div>
<div class="t" style="left:-1px;top:547.8px;font-size:10.5px;color:#444;width:19px;text-align:center;letter-spacing:-0.7px">36</div>
<div style="position:absolute;left:0px;top:559px;width:17px;height:1px;background:#d4d4d4"></div>
<div style="position:absolute;left:18px;top:141px;width:1006px;height:1px;background:#e0e0e0"></div>
<div style="position:absolute;left:18px;top:151px;width:1006px;height:1px;background:#e0e0e0"></div>
<div style="position:absolute;left:18px;top:162px;width:1006px;height:1px;background:#e0e0e0"></div>
<div style="position:absolute;left:18px;top:206px;width:1006px;height:1px;background:#e0e0e0"></div>
<div style="position:absolute;left:18px;top:217px;width:1006px;height:1px;background:#e0e0e0"></div>
<div style="position:absolute;left:18px;top:227px;width:1006px;height:1px;background:#e0e0e0"></div>
<div style="position:absolute;left:18px;top:238px;width:1006px;height:1px;background:#e0e0e0"></div>
<div style="position:absolute;left:18px;top:248px;width:1006px;height:1px;background:#e0e0e0"></div>
<div style="position:absolute;left:18px;top:260px;width:1006px;height:1px;background:#e0e0e0"></div>
<div style="position:absolute;left:18px;top:271px;width:1006px;height:1px;background:#e0e0e0"></div>
<div style="position:absolute;left:18px;top:282px;width:1006px;height:1px;background:#e0e0e0"></div>
<div style="position:absolute;left:18px;top:292px;width:1006px;height:1px;background:#e0e0e0"></div>
<div style="position:absolute;left:18px;top:303px;width:1006px;height:1px;background:#e0e0e0"></div>
<div style="position:absolute;left:18px;top:313px;width:1006px;height:1px;background:#e0e0e0"></div>
<div style="position:absolute;left:18px;top:324px;width:1006px;height:1px;background:#e0e0e0"></div>
<div style="position:absolute;left:18px;top:334px;width:1006px;height:1px;background:#e0e0e0"></div>
<div style="position:absolute;left:18px;top:345px;width:1006px;height:1px;background:#e0e0e0"></div>
<div style="position:absolute;left:18px;top:355px;width:1006px;height:1px;background:#e0e0e0"></div>
<div style="position:absolute;left:18px;top:366px;width:1006px;height:1px;background:#e0e0e0"></div>
<div style="position:absolute;left:18px;top:376px;width:1006px;height:1px;background:#e0e0e0"></div>
<div style="position:absolute;left:18px;top:387px;width:1006px;height:1px;background:#e0e0e0"></div>
<div style="position:absolute;left:18px;top:398px;width:1006px;height:1px;background:#e0e0e0"></div>
<div style="position:absolute;left:18px;top:410px;width:1006px;height:1px;background:#e0e0e0"></div>
<div style="position:absolute;left:18px;top:420px;width:1006px;height:1px;background:#e0e0e0"></div>
<div style="position:absolute;left:18px;top:433px;width:1006px;height:1px;background:#e0e0e0"></div>
<div style="position:absolute;left:18px;top:445px;width:1006px;height:1px;background:#e0e0e0"></div>
<div style="position:absolute;left:18px;top:457px;width:1006px;height:1px;background:#e0e0e0"></div>
<div style="position:absolute;left:18px;top:469px;width:1006px;height:1px;background:#e0e0e0"></div>
<div style="position:absolute;left:18px;top:481px;width:1006px;height:1px;background:#e0e0e0"></div>
<div style="position:absolute;left:18px;top:493px;width:1006px;height:1px;background:#e0e0e0"></div>
<div style="position:absolute;left:18px;top:506px;width:1006px;height:1px;background:#e0e0e0"></div>
<div style="position:absolute;left:18px;top:517px;width:1006px;height:1px;background:#e0e0e0"></div>
<div style="position:absolute;left:18px;top:528px;width:1006px;height:1px;background:#e0e0e0"></div>
<div style="position:absolute;left:18px;top:538px;width:1006px;height:1px;background:#e0e0e0"></div>
<div style="position:absolute;left:18px;top:549px;width:1006px;height:1px;background:#e0e0e0"></div>
<div style="position:absolute;left:18px;top:559px;width:1006px;height:1px;background:#e0e0e0"></div>
<div style="position:absolute;left:51px;top:131px;width:1px;height:11px;background:#e0e0e0"></div>
<div style="position:absolute;left:51px;top:151px;width:1px;height:1px;background:#e0e0e0"></div>
<div style="position:absolute;left:51px;top:162px;width:1px;height:259px;background:#e0e0e0"></div>
<div style="position:absolute;left:51px;top:433px;width:1px;height:1px;background:#e0e0e0"></div>
<div style="position:absolute;left:51px;top:445px;width:1px;height:1px;background:#e0e0e0"></div>
<div style="position:absolute;left:51px;top:457px;width:1px;height:1px;background:#e0e0e0"></div>
<div style="position:absolute;left:51px;top:469px;width:1px;height:1px;background:#e0e0e0"></div>
<div style="position:absolute;left:51px;top:481px;width:1px;height:1px;background:#e0e0e0"></div>
<div style="position:absolute;left:51px;top:493px;width:1px;height:1px;background:#e0e0e0"></div>
<div style="position:absolute;left:51px;top:506px;width:1px;height:55px;background:#e0e0e0"></div>
<div style="position:absolute;left:95px;top:131px;width:1px;height:11px;background:#e0e0e0"></div>
<div style="position:absolute;left:95px;top:151px;width:1px;height:1px;background:#e0e0e0"></div>
<div style="position:absolute;left:95px;top:162px;width:1px;height:259px;background:#e0e0e0"></div>
<div style="position:absolute;left:95px;top:433px;width:1px;height:1px;background:#e0e0e0"></div>
<div style="position:absolute;left:95px;top:445px;width:1px;height:1px;background:#e0e0e0"></div>
<div style="position:absolute;left:95px;top:457px;width:1px;height:1px;background:#e0e0e0"></div>
<div style="position:absolute;left:95px;top:469px;width:1px;height:1px;background:#e0e0e0"></div>
<div style="position:absolute;left:95px;top:481px;width:1px;height:1px;background:#e0e0e0"></div>
<div style="position:absolute;left:95px;top:493px;width:1px;height:1px;background:#e0e0e0"></div>
<div style="position:absolute;left:95px;top:506px;width:1px;height:55px;background:#e0e0e0"></div>
<div style="position:absolute;left:138px;top:131px;width:1px;height:21px;background:#e0e0e0"></div>
<div style="position:absolute;left:138px;top:162px;width:1px;height:259px;background:#e0e0e0"></div>
<div style="position:absolute;left:138px;top:433px;width:1px;height:1px;background:#e0e0e0"></div>
<div style="position:absolute;left:138px;top:445px;width:1px;height:1px;background:#e0e0e0"></div>
<div style="position:absolute;left:138px;top:457px;width:1px;height:1px;background:#e0e0e0"></div>
<div style="position:absolute;left:138px;top:469px;width:1px;height:1px;background:#e0e0e0"></div>
<div style="position:absolute;left:138px;top:481px;width:1px;height:13px;background:#e0e0e0"></div>
<div style="position:absolute;left:138px;top:506px;width:1px;height:55px;background:#e0e0e0"></div>
<div style="position:absolute;left:178px;top:131px;width:1px;height:21px;background:#e0e0e0"></div>
<div style="position:absolute;left:178px;top:162px;width:1px;height:259px;background:#e0e0e0"></div>
<div style="position:absolute;left:178px;top:433px;width:1px;height:1px;background:#e0e0e0"></div>
<div style="position:absolute;left:178px;top:445px;width:1px;height:1px;background:#e0e0e0"></div>
<div style="position:absolute;left:178px;top:457px;width:1px;height:1px;background:#e0e0e0"></div>
<div style="position:absolute;left:178px;top:469px;width:1px;height:1px;background:#e0e0e0"></div>
<div style="position:absolute;left:178px;top:481px;width:1px;height:13px;background:#e0e0e0"></div>
<div style="position:absolute;left:178px;top:506px;width:1px;height:55px;background:#e0e0e0"></div>
<div style="position:absolute;left:224px;top:131px;width:1px;height:290px;background:#e0e0e0"></div>
<div style="position:absolute;left:224px;top:433px;width:1px;height:1px;background:#e0e0e0"></div>
<div style="position:absolute;left:224px;top:445px;width:1px;height:1px;background:#e0e0e0"></div>
<div style="position:absolute;left:224px;top:457px;width:1px;height:1px;background:#e0e0e0"></div>
<div style="position:absolute;left:224px;top:469px;width:1px;height:1px;background:#e0e0e0"></div>
<div style="position:absolute;left:224px;top:481px;width:1px;height:13px;background:#e0e0e0"></div>
<div style="position:absolute;left:224px;top:506px;width:1px;height:55px;background:#e0e0e0"></div>
<div style="position:absolute;left:277px;top:131px;width:1px;height:290px;background:#e0e0e0"></div>
<div style="position:absolute;left:277px;top:433px;width:1px;height:1px;background:#e0e0e0"></div>
<div style="position:absolute;left:277px;top:445px;width:1px;height:1px;background:#e0e0e0"></div>
<div style="position:absolute;left:277px;top:457px;width:1px;height:1px;background:#e0e0e0"></div>
<div style="position:absolute;left:277px;top:469px;width:1px;height:1px;background:#e0e0e0"></div>
<div style="position:absolute;left:277px;top:481px;width:1px;height:13px;background:#e0e0e0"></div>
<div style="position:absolute;left:277px;top:506px;width:1px;height:55px;background:#e0e0e0"></div>
<div style="position:absolute;left:317px;top:131px;width:1px;height:290px;background:#e0e0e0"></div>
<div style="position:absolute;left:317px;top:433px;width:1px;height:1px;background:#e0e0e0"></div>
<div style="position:absolute;left:317px;top:445px;width:1px;height:1px;background:#e0e0e0"></div>
<div style="position:absolute;left:317px;top:457px;width:1px;height:1px;background:#e0e0e0"></div>
<div style="position:absolute;left:317px;top:469px;width:1px;height:1px;background:#e0e0e0"></div>
<div style="position:absolute;left:317px;top:481px;width:1px;height:13px;background:#e0e0e0"></div>
<div style="position:absolute;left:317px;top:506px;width:1px;height:55px;background:#e0e0e0"></div>
<div style="position:absolute;left:360px;top:131px;width:1px;height:290px;background:#e0e0e0"></div>
<div style="position:absolute;left:360px;top:433px;width:1px;height:13px;background:#e0e0e0"></div>
<div style="position:absolute;left:360px;top:457px;width:1px;height:1px;background:#e0e0e0"></div>
<div style="position:absolute;left:360px;top:469px;width:1px;height:1px;background:#e0e0e0"></div>
<div style="position:absolute;left:360px;top:481px;width:1px;height:13px;background:#e0e0e0"></div>
<div style="position:absolute;left:360px;top:506px;width:1px;height:55px;background:#e0e0e0"></div>
<div style="position:absolute;left:403px;top:131px;width:1px;height:290px;background:#e0e0e0"></div>
<div style="position:absolute;left:403px;top:433px;width:1px;height:13px;background:#e0e0e0"></div>
<div style="position:absolute;left:403px;top:457px;width:1px;height:1px;background:#e0e0e0"></div>
<div style="position:absolute;left:403px;top:469px;width:1px;height:1px;background:#e0e0e0"></div>
<div style="position:absolute;left:403px;top:481px;width:1px;height:13px;background:#e0e0e0"></div>
<div style="position:absolute;left:403px;top:506px;width:1px;height:55px;background:#e0e0e0"></div>
<div style="position:absolute;left:447px;top:131px;width:1px;height:315px;background:#e0e0e0"></div>
<div style="position:absolute;left:447px;top:457px;width:1px;height:1px;background:#e0e0e0"></div>
<div style="position:absolute;left:447px;top:469px;width:1px;height:25px;background:#e0e0e0"></div>
<div style="position:absolute;left:447px;top:506px;width:1px;height:55px;background:#e0e0e0"></div>
<div style="position:absolute;left:486px;top:131px;width:1px;height:315px;background:#e0e0e0"></div>
<div style="position:absolute;left:486px;top:457px;width:1px;height:37px;background:#e0e0e0"></div>
<div style="position:absolute;left:486px;top:506px;width:1px;height:55px;background:#e0e0e0"></div>
<div style="position:absolute;left:528px;top:131px;width:1px;height:315px;background:#e0e0e0"></div>
<div style="position:absolute;left:528px;top:457px;width:1px;height:37px;background:#e0e0e0"></div>
<div style="position:absolute;left:528px;top:506px;width:1px;height:55px;background:#e0e0e0"></div>
<div style="position:absolute;left:570px;top:131px;width:1px;height:315px;background:#e0e0e0"></div>
<div style="position:absolute;left:570px;top:457px;width:1px;height:37px;background:#e0e0e0"></div>
<div style="position:absolute;left:570px;top:506px;width:1px;height:55px;background:#e0e0e0"></div>
<div style="position:absolute;left:613px;top:131px;width:1px;height:430px;background:#e0e0e0"></div>
<div style="position:absolute;left:656px;top:131px;width:1px;height:430px;background:#e0e0e0"></div>
<div style="position:absolute;left:696px;top:131px;width:1px;height:430px;background:#e0e0e0"></div>
<div style="position:absolute;left:737px;top:131px;width:1px;height:430px;background:#e0e0e0"></div>
<div style="position:absolute;left:778px;top:131px;width:1px;height:430px;background:#e0e0e0"></div>
<div style="position:absolute;left:827px;top:131px;width:1px;height:430px;background:#e0e0e0"></div>
<div style="position:absolute;left:868px;top:131px;width:1px;height:430px;background:#e0e0e0"></div>
<div style="position:absolute;left:908px;top:131px;width:1px;height:430px;background:#e0e0e0"></div>
<div style="position:absolute;left:948px;top:131px;width:1px;height:430px;background:#e0e0e0"></div>
<div style="position:absolute;left:990px;top:131px;width:1px;height:430px;background:#e0e0e0"></div>
<div style="position:absolute;left:18px;top:141px;width:931px;height:1px;background:#6a6a6a"></div>
<div style="position:absolute;left:18px;top:162px;width:931px;height:1px;background:#6a6a6a"></div>
<div style="position:absolute;left:18px;top:206px;width:931px;height:1px;background:#6a6a6a"></div>
<div style="position:absolute;left:18px;top:420px;width:931px;height:1px;background:#6a6a6a"></div>
<div class="t" style="font-family:'Liberation Serif',serif;left:19px;top:133.30px;font-size:8px;transform:scaleY(1.12);transform-origin:0 83.75%;font-weight:bold;color:#111">Table 1</div>
<div class="t" style="font-family:'Liberation Serif',serif;left:19px;top:143.30px;font-size:8px;transform:scaleY(1.12);transform-origin:0 83.75%;font-weight:bold;color:#111">Crime in the United States</div>
<div class="t" style="font-family:'Liberation Serif',serif;left:19px;top:154.05px;font-size:7.7px;transform:scaleY(1.12);transform-origin:0 83.75%;color:#111">by Volume and Rate per 100,000 Inhabitants, 1997&ndash;2016</div>
<div class="t" style="font-family:'Liberation Serif',serif;left:-115.5px;width:300px;text-align:center;top:198.15px;font-size:7.7px;transform:scaleY(1.12);transform-origin:0 83.75%;color:#111">Year</div>
<div class="t" style="font-family:'Liberation Serif',serif;left:-76.5px;width:300px;text-align:center;top:198.15px;font-size:7.7px;transform:scaleY(1.12);transform-origin:0 83.75%;color:#111">Population<span style="font-size:5.4px;vertical-align:3px">1</span></div>
<div class="t" style="font-family:'Liberation Serif',serif;left:-33.0px;width:300px;text-align:center;top:197.90px;font-size:8px;transform:scaleY(1.12);transform-origin:0 83.75%;font-weight:bold;color:#111">crime<span style="font-size:5.4px;vertical-align:3px">2</span></div>
<div class="t" style="font-family:'Liberation Serif',serif;left:-33.0px;width:300px;text-align:center;top:185.00px;font-size:8px;transform:scaleY(1.12);transform-origin:0 83.75%;font-weight:bold;color:#111">Violent</div>
<div class="t" style="font-family:'Liberation Serif',serif;left:8.5px;width:300px;text-align:center;top:198.15px;font-size:7.7px;transform:scaleY(1.12);transform-origin:0 83.75%;font-style:italic;color:#333">rate</div>
<div class="t" style="font-family:'Liberation Serif',serif;left:8.5px;width:300px;text-align:center;top:187.55px;font-size:7.7px;transform:scaleY(1.12);transform-origin:0 83.75%;font-style:italic;color:#333">crime</div>
<div class="t" style="font-family:'Liberation Serif',serif;left:8.5px;width:300px;text-align:center;top:176.95px;font-size:7.7px;transform:scaleY(1.12);transform-origin:0 83.75%;font-style:italic;color:#333">Violent</div>
<div class="t" style="font-family:'Liberation Serif',serif;left:51.5px;width:300px;text-align:center;top:198.15px;font-size:7.7px;transform:scaleY(1.12);transform-origin:0 83.75%;color:#111">manslaughter</div>
<div class="t" style="font-family:'Liberation Serif',serif;left:51.5px;width:300px;text-align:center;top:187.55px;font-size:7.7px;transform:scaleY(1.12);transform-origin:0 83.75%;color:#111">nonnegligent</div>
<div class="t" style="font-family:'Liberation Serif',serif;left:51.5px;width:300px;text-align:center;top:176.95px;font-size:7.7px;transform:scaleY(1.12);transform-origin:0 83.75%;color:#111">Murder and</div>
<div class="t" style="font-family:'Liberation Serif',serif;left:101.0px;width:300px;text-align:center;top:198.15px;font-size:7.7px;transform:scaleY(1.12);transform-origin:0 83.75%;font-style:italic;color:#333">rate</div>
<div class="t" style="font-family:'Liberation Serif',serif;left:101.0px;width:300px;text-align:center;top:187.55px;font-size:7.7px;transform:scaleY(1.12);transform-origin:0 83.75%;font-style:italic;color:#333">manslaughter</div>
<div class="t" style="font-family:'Liberation Serif',serif;left:101.0px;width:300px;text-align:center;top:176.95px;font-size:7.7px;transform:scaleY(1.12);transform-origin:0 83.75%;font-style:italic;color:#333">nonnegligent</div>
<div class="t" style="font-family:'Liberation Serif',serif;left:101.0px;width:300px;text-align:center;top:166.35px;font-size:7.7px;transform:scaleY(1.12);transform-origin:0 83.75%;font-style:italic;color:#333">Murder and</div>
<div class="t" style="font-family:'Liberation Serif',serif;left:147.5px;width:300px;text-align:center;top:198.15px;font-size:7.7px;transform:scaleY(1.12);transform-origin:0 83.75%;color:#111">definition<span style="font-size:5.4px;vertical-align:3px">3</span>)</div>
<div class="t" style="font-family:'Liberation Serif',serif;left:147.5px;width:300px;text-align:center;top:186.35px;font-size:7.7px;transform:scaleY(1.12);transform-origin:0 83.75%;color:#111">(revised</div>
<div class="t" style="font-family:'Liberation Serif',serif;left:147.5px;width:300px;text-align:center;top:175.75px;font-size:7.7px;transform:scaleY(1.12);transform-origin:0 83.75%;color:#111">Rape</div>
<div class="t" style="font-family:'Liberation Serif',serif;left:189.0px;width:300px;text-align:center;top:198.15px;font-size:7.7px;transform:scaleY(1.12);transform-origin:0 83.75%;font-style:italic;color:#333">rate<span style="font-size:5.4px;vertical-align:3px">3</span></div>
<div class="t" style="font-family:'Liberation Serif',serif;left:189.0px;width:300px;text-align:center;top:187.55px;font-size:7.7px;transform:scaleY(1.12);transform-origin:0 83.75%;font-style:italic;color:#333">definition)</div>
<div class="t" style="font-family:'Liberation Serif',serif;left:189.0px;width:300px;text-align:center;top:176.95px;font-size:7.7px;transform:scaleY(1.12);transform-origin:0 83.75%;font-style:italic;color:#333">(revised</div>
<div class="t" style="font-family:'Liberation Serif',serif;left:189.0px;width:300px;text-align:center;top:166.35px;font-size:7.7px;transform:scaleY(1.12);transform-origin:0 83.75%;font-style:italic;color:#333">Rape</div>
<div class="t" style="font-family:'Liberation Serif',serif;left:232.0px;width:300px;text-align:center;top:198.15px;font-size:7.7px;transform:scaleY(1.12);transform-origin:0 83.75%;color:#111">definition<span style="font-size:5.4px;vertical-align:3px">4</span>)</div>
<div class="t" style="font-family:'Liberation Serif',serif;left:232.0px;width:300px;text-align:center;top:186.35px;font-size:7.7px;transform:scaleY(1.12);transform-origin:0 83.75%;color:#111">(legacy</div>
<div class="t" style="font-family:'Liberation Serif',serif;left:232.0px;width:300px;text-align:center;top:175.75px;font-size:7.7px;transform:scaleY(1.12);transform-origin:0 83.75%;color:#111">Rape</div>
<div class="t" style="font-family:'Liberation Serif',serif;left:275.5px;width:300px;text-align:center;top:198.15px;font-size:7.7px;transform:scaleY(1.12);transform-origin:0 83.75%;font-style:italic;color:#333">rate<span style="font-size:5.4px;vertical-align:3px">4</span></div>
<div class="t" style="font-family:'Liberation Serif',serif;left:275.5px;width:300px;text-align:center;top:187.55px;font-size:7.7px;transform:scaleY(1.12);transform-origin:0 83.75%;font-style:italic;color:#333">definition)</div>
<div class="t" style="font-family:'Liberation Serif',serif;left:275.5px;width:300px;text-align:center;top:176.95px;font-size:7.7px;transform:scaleY(1.12);transform-origin:0 83.75%;font-style:italic;color:#333">(legacy</div>
<div class="t" style="font-family:'Liberation Serif',serif;left:275.5px;width:300px;text-align:center;top:166.35px;font-size:7.7px;transform:scaleY(1.12);transform-origin:0 83.75%;font-style:italic;color:#333">Rape</div>
<div class="t" style="font-family:'Liberation Serif',serif;left:317.0px;width:300px;text-align:center;top:198.15px;font-size:7.7px;transform:scaleY(1.12);transform-origin:0 83.75%;color:#111">Robbery</div>
<div class="t" style="font-family:'Liberation Serif',serif;left:357.5px;width:300px;text-align:center;top:198.15px;font-size:7.7px;transform:scaleY(1.12);transform-origin:0 83.75%;font-style:italic;color:#333">rate</div>
<div class="t" style="font-family:'Liberation Serif',serif;left:357.5px;width:300px;text-align:center;top:187.55px;font-size:7.7px;transform:scaleY(1.12);transform-origin:0 83.75%;font-style:italic;color:#333">Robbery</div>
<div class="t" style="font-family:'Liberation Serif',serif;left:399.5px;width:300px;text-align:center;top:198.15px;font-size:7.7px;transform:scaleY(1.12);transform-origin:0 83.75%;color:#111">assault</div>
<div class="t" style="font-family:'Liberation Serif',serif;left:399.5px;width:300px;text-align:center;top:187.55px;font-size:7.7px;transform:scaleY(1.12);transform-origin:0 83.75%;color:#111">Aggravated</div>
<div class="t" style="font-family:'Liberation Serif',serif;left:442.0px;width:300px;text-align:center;top:198.15px;font-size:7.7px;transform:scaleY(1.12);transform-origin:0 83.75%;font-style:italic;color:#333">assault rate</div>
<div class="t" style="font-family:'Liberation Serif',serif;left:442.0px;width:300px;text-align:center;top:187.55px;font-size:7.7px;transform:scaleY(1.12);transform-origin:0 83.75%;font-style:italic;color:#333">Aggravated</div>
<div class="t" style="font-family:'Liberation Serif',serif;left:485.0px;width:300px;text-align:center;top:197.90px;font-size:8px;transform:scaleY(1.12);transform-origin:0 83.75%;font-weight:bold;color:#111">crime</div>
<div class="t" style="font-family:'Liberation Serif',serif;left:485.0px;width:300px;text-align:center;top:187.30px;font-size:8px;transform:scaleY(1.12);transform-origin:0 83.75%;font-weight:bold;color:#111">Property</div>
<div class="t" style="font-family:'Liberation Serif',serif;left:526.5px;width:300px;text-align:center;top:198.15px;font-size:7.7px;transform:scaleY(1.12);transform-origin:0 83.75%;font-style:italic;color:#333">rate</div>
<div class="t" style="font-family:'Liberation Serif',serif;left:526.5px;width:300px;text-align:center;top:187.55px;font-size:7.7px;transform:scaleY(1.12);transform-origin:0 83.75%;font-style:italic;color:#333">crime</div>
<div class="t" style="font-family:'Liberation Serif',serif;left:526.5px;width:300px;text-align:center;top:176.95px;font-size:7.7px;transform:scaleY(1.12);transform-origin:0 83.75%;font-style:italic;color:#333">Property</div>
<div class="t" style="font-family:'Liberation Serif',serif;left:567.0px;width:300px;text-align:center;top:198.15px;font-size:7.7px;transform:scaleY(1.12);transform-origin:0 83.75%;color:#111">Burglary</div>
<div class="t" style="font-family:'Liberation Serif',serif;left:608.0px;width:300px;text-align:center;top:198.15px;font-size:7.7px;transform:scaleY(1.12);transform-origin:0 83.75%;font-style:italic;color:#333">rate</div>
<div class="t" style="font-family:'Liberation Serif',serif;left:608.0px;width:300px;text-align:center;top:187.55px;font-size:7.7px;transform:scaleY(1.12);transform-origin:0 83.75%;font-style:italic;color:#333">Burglary</div>
<div class="t" style="font-family:'Liberation Serif',serif;left:653.0px;width:300px;text-align:center;top:198.15px;font-size:7.7px;transform:scaleY(1.12);transform-origin:0 83.75%;color:#111">theft</div>
<div class="t" style="font-family:'Liberation Serif',serif;left:653.0px;width:300px;text-align:center;top:187.55px;font-size:7.7px;transform:scaleY(1.12);transform-origin:0 83.75%;color:#111">Larceny-</div>
<div class="t" style="font-family:'Liberation Serif',serif;left:698.0px;width:300px;text-align:center;top:198.15px;font-size:7.7px;transform:scaleY(1.12);transform-origin:0 83.75%;font-style:italic;color:#333">theft rate</div>
<div class="t" style="font-family:'Liberation Serif',serif;left:698.0px;width:300px;text-align:center;top:187.55px;font-size:7.7px;transform:scaleY(1.12);transform-origin:0 83.75%;font-style:italic;color:#333">Larceny-</div>
<div class="t" style="font-family:'Liberation Serif',serif;left:738.5px;width:300px;text-align:center;top:198.15px;font-size:7.7px;transform:scaleY(1.12);transform-origin:0 83.75%;color:#111">theft</div>
<div class="t" style="font-family:'Liberation Serif',serif;left:738.5px;width:300px;text-align:center;top:187.55px;font-size:7.7px;transform:scaleY(1.12);transform-origin:0 83.75%;color:#111">vehicle</div>
<div class="t" style="font-family:'Liberation Serif',serif;left:738.5px;width:300px;text-align:center;top:176.95px;font-size:7.7px;transform:scaleY(1.12);transform-origin:0 83.75%;color:#111">Motor</div>
<div class="t" style="font-family:'Liberation Serif',serif;left:778.5px;width:300px;text-align:center;top:198.15px;font-size:7.7px;transform:scaleY(1.12);transform-origin:0 83.75%;font-style:italic;color:#333">rate</div>
<div class="t" style="font-family:'Liberation Serif',serif;left:778.5px;width:300px;text-align:center;top:187.55px;font-size:7.7px;transform:scaleY(1.12);transform-origin:0 83.75%;font-style:italic;color:#333">theft</div>
<div class="t" style="font-family:'Liberation Serif',serif;left:778.5px;width:300px;text-align:center;top:176.95px;font-size:7.7px;transform:scaleY(1.12);transform-origin:0 83.75%;font-style:italic;color:#333">vehicle</div>
<div class="t" style="font-family:'Liberation Serif',serif;left:778.5px;width:300px;text-align:center;top:166.35px;font-size:7.7px;transform:scaleY(1.12);transform-origin:0 83.75%;font-style:italic;color:#333">Motor</div>
<div class="t" style="font-family:'Liberation Serif',serif;left:-115.5px;width:300px;text-align:center;top:209.25px;font-size:7.7px;transform:scaleY(1.12);transform-origin:0 83.75%;color:#111">1997</div>
<div class="t" style="font-family:'Liberation Serif',serif;left:-206.8px;width:300px;text-align:right;top:209.25px;font-size:7.7px;transform:scaleY(1.12);transform-origin:0 83.75%;color:#111">267,783,607</div>
<div class="t" style="font-family:'Liberation Serif',serif;left:-164px;width:300px;text-align:right;top:209.25px;font-size:7.7px;transform:scaleY(1.12);transform-origin:0 83.75%;color:#111">1,636,096</div>
<div class="t" style="font-family:'Liberation Serif',serif;left:-131px;width:300px;text-align:right;top:209.25px;font-size:7.7px;transform:scaleY(1.12);transform-origin:0 83.75%;color:#111">611.0</div>
<div class="t" style="font-family:'Liberation Serif',serif;left:-76.6px;width:300px;text-align:right;top:209.25px;font-size:7.7px;transform:scaleY(1.12);transform-origin:0 83.75%;color:#111">18,208</div>
<div class="t" style="font-family:'Liberation Serif',serif;left:-31.69999999999999px;width:300px;text-align:right;top:209.25px;font-size:7.7px;transform:scaleY(1.12);transform-origin:0 83.75%;color:#111">6.8</div>
<div class="t" style="font-family:'Liberation Serif',serif;left:101px;width:300px;text-align:right;top:209.25px;font-size:7.7px;transform:scaleY(1.12);transform-origin:0 83.75%;color:#111">96,153</div>
<div class="t" style="font-family:'Liberation Serif',serif;left:137.7px;width:300px;text-align:right;top:209.25px;font-size:7.7px;transform:scaleY(1.12);transform-origin:0 83.75%;color:#111">35.9</div>
<div class="t" style="font-family:'Liberation Serif',serif;left:184px;width:300px;text-align:right;top:209.25px;font-size:7.7px;transform:scaleY(1.12);transform-origin:0 83.75%;color:#111">498,534</div>
<div class="t" style="font-family:'Liberation Serif',serif;left:219.5px;width:300px;text-align:right;top:209.25px;font-size:7.7px;transform:scaleY(1.12);transform-origin:0 83.75%;color:#111">186.2</div>
<div class="t" style="font-family:'Liberation Serif',serif;left:269px;width:300px;text-align:right;top:209.25px;font-size:7.7px;transform:scaleY(1.12);transform-origin:0 83.75%;color:#111">1,023,201</div>
<div class="t" style="font-family:'Liberation Serif',serif;left:304.6px;width:300px;text-align:right;top:209.25px;font-size:7.7px;transform:scaleY(1.12);transform-origin:0 83.75%;color:#111">382.1</div>
<div class="t" style="font-family:'Liberation Serif',serif;left:353.79999999999995px;width:300px;text-align:right;top:209.25px;font-size:7.7px;transform:scaleY(1.12);transform-origin:0 83.75%;color:#111">11,558,475</div>
<div class="t" style="font-family:'Liberation Serif',serif;left:394px;width:300px;text-align:right;top:209.25px;font-size:7.7px;transform:scaleY(1.12);transform-origin:0 83.75%;color:#111">4,316.3</div>
<div class="t" style="font-family:'Liberation Serif',serif;left:435.5px;width:300px;text-align:right;top:209.25px;font-size:7.7px;transform:scaleY(1.12);transform-origin:0 83.75%;color:#111">2,460,526</div>
<div class="t" style="font-family:'Liberation Serif',serif;left:476px;width:300px;text-align:right;top:209.25px;font-size:7.7px;transform:scaleY(1.12);transform-origin:0 83.75%;color:#111">918.8</div>
<div class="t" style="font-family:'Liberation Serif',serif;left:525.8px;width:300px;text-align:right;top:209.25px;font-size:7.7px;transform:scaleY(1.12);transform-origin:0 83.75%;color:#111">7,743,760</div>
<div class="t" style="font-family:'Liberation Serif',serif;left:566.6px;width:300px;text-align:right;top:209.25px;font-size:7.7px;transform:scaleY(1.12);transform-origin:0 83.75%;color:#111">2,891.8</div>
<div class="t" style="font-family:'Liberation Serif',serif;left:607px;width:300px;text-align:right;top:209.25px;font-size:7.7px;transform:scaleY(1.12);transform-origin:0 83.75%;color:#111">1,354,189</div>
<div class="t" style="font-family:'Liberation Serif',serif;left:639.2px;width:300px;text-align:right;top:209.25px;font-size:7.7px;transform:scaleY(1.12);transform-origin:0 83.75%;color:#111">505.7</div>
<div class="t" style="font-family:'Liberation Serif',serif;left:-115.5px;width:300px;text-align:center;top:219.25px;font-size:7.7px;transform:scaleY(1.12);transform-origin:0 83.75%;color:#111">1998</div>
<div class="t" style="font-family:'Liberation Serif',serif;left:-206.8px;width:300px;text-align:right;top:219.25px;font-size:7.7px;transform:scaleY(1.12);transform-origin:0 83.75%;color:#111">270,248,003</div>
<div class="t" style="font-family:'Liberation Serif',serif;left:-164px;width:300px;text-align:right;top:219.25px;font-size:7.7px;transform:scaleY(1.12);transform-origin:0 83.75%;color:#111">1,533,887</div>
<div class="t" style="font-family:'Liberation Serif',serif;left:-131px;width:300px;text-align:right;top:219.25px;font-size:7.7px;transform:scaleY(1.12);transform-origin:0 83.75%;color:#111">567.6</div>
<div class="t" style="font-family:'Liberation Serif',serif;left:-76.6px;width:300px;text-align:right;top:219.25px;font-size:7.7px;transform:scaleY(1.12);transform-origin:0 83.75%;color:#111">16,974</div>
<div class="t" style="font-family:'Liberation Serif',serif;left:-31.69999999999999px;width:300px;text-align:right;top:219.25px;font-size:7.7px;transform:scaleY(1.12);transform-origin:0 83.75%;color:#111">6.3</div>
<div class="t" style="font-family:'Liberation Serif',serif;left:101px;width:300px;text-align:right;top:219.25px;font-size:7.7px;transform:scaleY(1.12);transform-origin:0 83.75%;color:#111">93,144</div>
<div class="t" style="font-family:'Liberation Serif',serif;left:137.7px;width:300px;text-align:right;top:219.25px;font-size:7.7px;transform:scaleY(1.12);transform-origin:0 83.75%;color:#111">34.5</div>
<div class="t" style="font-family:'Liberation Serif',serif;left:184px;width:300px;text-align:right;top:219.25px;font-size:7.7px;transform:scaleY(1.12);transform-origin:0 83.75%;color:#111">447,186</div>
<div class="t" style="font-family:'Liberation Serif',serif;left:219.5px;width:300px;text-align:right;top:219.25px;font-size:7.7px;transform:scaleY(1.12);transform-origin:0 83.75%;color:#111">165.5</div>
<div class="t" style="font-family:'Liberation Serif',serif;left:269px;width:300px;text-align:right;top:219.25px;font-size:7.7px;transform:scaleY(1.12);transform-origin:0 83.75%;color:#111">976,583</div>
<div class="t" style="font-family:'Liberation Serif',serif;left:304.6px;width:300px;text-align:right;top:219.25px;font-size:7.7px;transform:scaleY(1.12);transform-origin:0 83.75%;color:#111">361.4</div>
<div class="t" style="font-family:'Liberation Serif',serif;left:353.79999999999995px;width:300px;text-align:right;top:219.25px;font-size:7.7px;transform:scaleY(1.12);transform-origin:0 83.75%;color:#111">10,951,827</div>
<div class="t" style="font-family:'Liberation Serif',serif;left:394px;width:300px;text-align:right;top:219.25px;font-size:7.7px;transform:scaleY(1.12);transform-origin:0 83.75%;color:#111">4,052.5</div>
<div class="t" style="font-family:'Liberation Serif',serif;left:435.5px;width:300px;text-align:right;top:219.25px;font-size:7.7px;transform:scaleY(1.12);transform-origin:0 83.75%;color:#111">2,332,735</div>
<div class="t" style="font-family:'Liberation Serif',serif;left:476px;width:300px;text-align:right;top:219.25px;font-size:7.7px;transform:scaleY(1.12);transform-origin:0 83.75%;color:#111">863.2</div>
<div class="t" style="font-family:'Liberation Serif',serif;left:525.8px;width:300px;text-align:right;top:219.25px;font-size:7.7px;transform:scaleY(1.12);transform-origin:0 83.75%;color:#111">7,376,311</div>
<div class="t" style="font-family:'Liberation Serif',serif;left:566.6px;width:300px;text-align:right;top:219.25px;font-size:7.7px;transform:scaleY(1.12);transform-origin:0 83.75%;color:#111">2,729.5</div>
<div class="t" style="font-family:'Liberation Serif',serif;left:607px;width:300px;text-align:right;top:219.25px;font-size:7.7px;transform:scaleY(1.12);transform-origin:0 83.75%;color:#111">1,242,781</div>
<div class="t" style="font-family:'Liberation Serif',serif;left:639.2px;width:300px;text-align:right;top:219.25px;font-size:7.7px;transform:scaleY(1.12);transform-origin:0 83.75%;color:#111">459.9</div>
<div class="t" style="font-family:'Liberation Serif',serif;left:-115.5px;width:300px;text-align:center;top:230.25px;font-size:7.7px;transform:scaleY(1.12);transform-origin:0 83.75%;color:#111">1999</div>
<div class="t" style="font-family:'Liberation Serif',serif;left:-206.8px;width:300px;text-align:right;top:230.25px;font-size:7.7px;transform:scaleY(1.12);transform-origin:0 83.75%;color:#111">272,690,813</div>
<div class="t" style="font-family:'Liberation Serif',serif;left:-164px;width:300px;text-align:right;top:230.25px;font-size:7.7px;transform:scaleY(1.12);transform-origin:0 83.75%;color:#111">1,426,044</div>
<div class="t" style="font-family:'Liberation Serif',serif;left:-131px;width:300px;text-align:right;top:230.25px;font-size:7.7px;transform:scaleY(1.12);transform-origin:0 83.75%;color:#111">523.0</div>
<div class="t" style="font-family:'Liberation Serif',serif;left:-76.6px;width:300px;text-align:right;top:230.25px;font-size:7.7px;transform:scaleY(1.12);transform-origin:0 83.75%;color:#111">15,522</div>
<div class="t" style="font-family:'Liberation Serif',serif;left:-31.69999999999999px;width:300px;text-align:right;top:230.25px;font-size:7.7px;transform:scaleY(1.12);transform-origin:0 83.75%;color:#111">5.7</div>
<div class="t" style="font-family:'Liberation Serif',serif;left:101px;width:300px;text-align:right;top:230.25px;font-size:7.7px;transform:scaleY(1.12);transform-origin:0 83.75%;color:#111">89,411</div>
<div class="t" style="font-family:'Liberation Serif',serif;left:137.7px;width:300px;text-align:right;top:230.25px;font-size:7.7px;transform:scaleY(1.12);transform-origin:0 83.75%;color:#111">32.8</div>
<div class="t" style="font-family:'Liberation Serif',serif;left:184px;width:300px;text-align:right;top:230.25px;font-size:7.7px;transform:scaleY(1.12);transform-origin:0 83.75%;color:#111">409,371</div>
<div class="t" style="font-family:'Liberation Serif',serif;left:219.5px;width:300px;text-align:right;top:230.25px;font-size:7.7px;transform:scaleY(1.12);transform-origin:0 83.75%;color:#111">150.1</div>
<div class="t" style="font-family:'Liberation Serif',serif;left:269px;width:300px;text-align:right;top:230.25px;font-size:7.7px;transform:scaleY(1.12);transform-origin:0 83.75%;color:#111">911,740</div>
<div class="t" style="font-family:'Liberation Serif',serif;left:304.6px;width:300px;text-align:right;top:230.25px;font-size:7.7px;transform:scaleY(1.12);transform-origin:0 83.75%;color:#111">334.3</div>
<div class="t" style="font-family:'Liberation Serif',serif;left:353.79999999999995px;width:300px;text-align:right;top:230.25px;font-size:7.7px;transform:scaleY(1.12);transform-origin:0 83.75%;color:#111">10,208,334</div>
<div class="t" style="font-family:'Liberation Serif',serif;left:394px;width:300px;text-align:right;top:230.25px;font-size:7.7px;transform:scaleY(1.12);transform-origin:0 83.75%;color:#111">3,743.6</div>
<div class="t" style="font-family:'Liberation Serif',serif;left:435.5px;width:300px;text-align:right;top:230.25px;font-size:7.7px;transform:scaleY(1.12);transform-origin:0 83.75%;color:#111">2,100,739</div>
<div class="t" style="font-family:'Liberation Serif',serif;left:476px;width:300px;text-align:right;top:230.25px;font-size:7.7px;transform:scaleY(1.12);transform-origin:0 83.75%;color:#111">770.4</div>
<div class="t" style="font-family:'Liberation Serif',serif;left:525.8px;width:300px;text-align:right;top:230.25px;font-size:7.7px;transform:scaleY(1.12);transform-origin:0 83.75%;color:#111">6,955,520</div>
<div class="t" style="font-family:'Liberation Serif',serif;left:566.6px;width:300px;text-align:right;top:230.25px;font-size:7.7px;transform:scaleY(1.12);transform-origin:0 83.75%;color:#111">2,550.7</div>
<div class="t" style="font-family:'Liberation Serif',serif;left:607px;width:300px;text-align:right;top:230.25px;font-size:7.7px;transform:scaleY(1.12);transform-origin:0 83.75%;color:#111">1,152,075</div>
<div class="t" style="font-family:'Liberation Serif',serif;left:639.2px;width:300px;text-align:right;top:230.25px;font-size:7.7px;transform:scaleY(1.12);transform-origin:0 83.75%;color:#111">422.5</div>
<div class="t" style="font-family:'Liberation Serif',serif;left:-115.5px;width:300px;text-align:center;top:240.25px;font-size:7.7px;transform:scaleY(1.12);transform-origin:0 83.75%;color:#111">2000</div>
<div class="t" style="font-family:'Liberation Serif',serif;left:-206.8px;width:300px;text-align:right;top:240.25px;font-size:7.7px;transform:scaleY(1.12);transform-origin:0 83.75%;color:#111">281,421,906</div>
<div class="t" style="font-family:'Liberation Serif',serif;left:-164px;width:300px;text-align:right;top:240.25px;font-size:7.7px;transform:scaleY(1.12);transform-origin:0 83.75%;color:#111">1,425,486</div>
<div class="t" style="font-family:'Liberation Serif',serif;left:-131px;width:300px;text-align:right;top:240.25px;font-size:7.7px;transform:scaleY(1.12);transform-origin:0 83.75%;color:#111">506.5</div>
<div class="t" style="font-family:'Liberation Serif',serif;left:-76.6px;width:300px;text-align:right;top:240.25px;font-size:7.7px;transform:scaleY(1.12);transform-origin:0 83.75%;color:#111">15,586</div>
<div class="t" style="font-family:'Liberation Serif',serif;left:-31.69999999999999px;width:300px;text-align:right;top:240.25px;font-size:7.7px;transform:scaleY(1.12);transform-origin:0 83.75%;color:#111">5.5</div>
<div class="t" style="font-family:'Liberation Serif',serif;left:101px;width:300px;text-align:right;top:240.25px;font-size:7.7px;transform:scaleY(1.12);transform-origin:0 83.75%;color:#111">90,178</div>
<div class="t" style="font-family:'Liberation Serif',serif;left:137.7px;width:300px;text-align:right;top:240.25px;font-size:7.7px;transform:scaleY(1.12);transform-origin:0 83.75%;color:#111">32.0</div>
<div class="t" style="font-family:'Liberation Serif',serif;left:184px;width:300px;text-align:right;top:240.25px;font-size:7.7px;transform:scaleY(1.12);transform-origin:0 83.75%;color:#111">408,016</div>
<div class="t" style="font-family:'Liberation Serif',serif;left:219.5px;width:300px;text-align:right;top:240.25px;font-size:7.7px;transform:scaleY(1.12);transform-origin:0 83.75%;color:#111">145.0</div>
<div class="t" style="font-family:'Liberation Serif',serif;left:269px;width:300px;text-align:right;top:240.25px;font-size:7.7px;transform:scaleY(1.12);transform-origin:0 83.75%;color:#111">911,706</div>
<div class="t" style="font-family:'Liberation Serif',serif;left:304.6px;width:300px;text-align:right;top:240.25px;font-size:7.7px;transform:scaleY(1.12);transform-origin:0 83.75%;color:#111">324.0</div>
<div class="t" style="font-family:'Liberation Serif',serif;left:353.79999999999995px;width:300px;text-align:right;top:240.25px;font-size:7.7px;transform:scaleY(1.12);transform-origin:0 83.75%;color:#111">10,182,584</div>
<div class="t" style="font-family:'Liberation Serif',serif;left:394px;width:300px;text-align:right;top:240.25px;font-size:7.7px;transform:scaleY(1.12);transform-origin:0 83.75%;color:#111">3,618.3</div>
<div class="t" style="font-family:'Liberation Serif',serif;left:435.5px;width:300px;text-align:right;top:240.25px;font-size:7.7px;transform:scaleY(1.12);transform-origin:0 83.75%;color:#111">2,050,992</div>
<div class="t" style="font-family:'Liberation Serif',serif;left:476px;width:300px;text-align:right;top:240.25px;font-size:7.7px;transform:scaleY(1.12);transform-origin:0 83.75%;color:#111">728.8</div>
<div class="t" style="font-family:'Liberation Serif',serif;left:525.8px;width:300px;text-align:right;top:240.25px;font-size:7.7px;transform:scaleY(1.12);transform-origin:0 83.75%;color:#111">6,971,590</div>
<div class="t" style="font-family:'Liberation Serif',serif;left:566.6px;width:300px;text-align:right;top:240.25px;font-size:7.7px;transform:scaleY(1.12);transform-origin:0 83.75%;color:#111">2,477.3</div>
<div class="t" style="font-family:'Liberation Serif',serif;left:607px;width:300px;text-align:right;top:240.25px;font-size:7.7px;transform:scaleY(1.12);transform-origin:0 83.75%;color:#111">1,160,002</div>
<div class="t" style="font-family:'Liberation Serif',serif;left:639.2px;width:300px;text-align:right;top:240.25px;font-size:7.7px;transform:scaleY(1.12);transform-origin:0 83.75%;color:#111">412.2</div>
<div class="t" style="font-family:'Liberation Serif',serif;left:-115.5px;width:300px;text-align:center;top:252.25px;font-size:7.7px;transform:scaleY(1.12);transform-origin:0 83.75%;color:#111">2001</div>
<div class="t" style="font-family:'Liberation Serif',serif;left:42.5px;top:250.98px;font-size:5.4px;transform:scaleY(1.12);transform-origin:0 83.75%;color:#111">5</div>
<div class="t" style="font-family:'Liberation Serif',serif;left:-206.8px;width:300px;text-align:right;top:252.25px;font-size:7.7px;transform:scaleY(1.12);transform-origin:0 83.75%;color:#111">285,317,559</div>
<div class="t" style="font-family:'Liberation Serif',serif;left:-164px;width:300px;text-align:right;top:252.25px;font-size:7.7px;transform:scaleY(1.12);transform-origin:0 83.75%;color:#111">1,439,480</div>
<div class="t" style="font-family:'Liberation Serif',serif;left:-131px;width:300px;text-align:right;top:252.25px;font-size:7.7px;transform:scaleY(1.12);transform-origin:0 83.75%;color:#111">504.5</div>
<div class="t" style="font-family:'Liberation Serif',serif;left:-76.6px;width:300px;text-align:right;top:252.25px;font-size:7.7px;transform:scaleY(1.12);transform-origin:0 83.75%;color:#111">16,037</div>
<div class="t" style="font-family:'Liberation Serif',serif;left:-31.69999999999999px;width:300px;text-align:right;top:252.25px;font-size:7.7px;transform:scaleY(1.12);transform-origin:0 83.75%;color:#111">5.6</div>
<div class="t" style="font-family:'Liberation Serif',serif;left:101px;width:300px;text-align:right;top:252.25px;font-size:7.7px;transform:scaleY(1.12);transform-origin:0 83.75%;color:#111">90,863</div>
<div class="t" style="font-family:'Liberation Serif',serif;left:137.7px;width:300px;text-align:right;top:252.25px;font-size:7.7px;transform:scaleY(1.12);transform-origin:0 83.75%;color:#111">31.8</div>
<div class="t" style="font-family:'Liberation Serif',serif;left:184px;width:300px;text-align:right;top:252.25px;font-size:7.7px;transform:scaleY(1.12);transform-origin:0 83.75%;color:#111">423,557</div>
<div class="t" style="font-family:'Liberation Serif',serif;left:219.5px;width:300px;text-align:right;top:252.25px;font-size:7.7px;transform:scaleY(1.12);transform-origin:0 83.75%;color:#111">148.5</div>
<div class="t" style="font-family:'Liberation Serif',serif;left:269px;width:300px;text-align:right;top:252.25px;font-size:7.7px;transform:scaleY(1.12);transform-origin:0 83.75%;color:#111">909,023</div>
<div class="t" style="font-family:'Liberation Serif',serif;left:304.6px;width:300px;text-align:right;top:252.25px;font-size:7.7px;transform:scaleY(1.12);transform-origin:0 83.75%;color:#111">318.6</div>
<div class="t" style="font-family:'Liberation Serif',serif;left:353.79999999999995px;width:300px;text-align:right;top:252.25px;font-size:7.7px;transform:scaleY(1.12);transform-origin:0 83.75%;color:#111">10,437,189</div>
<div class="t" style="font-family:'Liberation Serif',serif;left:394px;width:300px;text-align:right;top:252.25px;font-size:7.7px;transform:scaleY(1.12);transform-origin:0 83.75%;color:#111">3,658.1</div>
<div class="t" style="font-family:'Liberation Serif',serif;left:435.5px;width:300px;text-align:right;top:252.25px;font-size:7.7px;transform:scaleY(1.12);transform-origin:0 83.75%;color:#111">2,116,531</div>
<div class="t" style="font-family:'Liberation Serif',serif;left:476px;width:300px;text-align:right;top:252.25px;font-size:7.7px;transform:scaleY(1.12);transform-origin:0 83.75%;color:#111">741.8</div>
<div class="t" style="font-family:'Liberation Serif',serif;left:525.8px;width:300px;text-align:right;top:252.25px;font-size:7.7px;transform:scaleY(1.12);transform-origin:0 83.75%;color:#111">7,092,267</div>
<div class="t" style="font-family:'Liberation Serif',serif;left:566.6px;width:300px;text-align:right;top:252.25px;font-size:7.7px;transform:scaleY(1.12);transform-origin:0 83.75%;color:#111">2,485.7</div>
<div class="t" style="font-family:'Liberation Serif',serif;left:607px;width:300px;text-align:right;top:252.25px;font-size:7.7px;transform:scaleY(1.12);transform-origin:0 83.75%;color:#111">1,228,391</div>
<div class="t" style="font-family:'Liberation Serif',serif;left:639.2px;width:300px;text-align:right;top:252.25px;font-size:7.7px;transform:scaleY(1.12);transform-origin:0 83.75%;color:#111">430.5</div>
<div class="t" style="font-family:'Liberation Serif',serif;left:-115.5px;width:300px;text-align:center;top:263.25px;font-size:7.7px;transform:scaleY(1.12);transform-origin:0 83.75%;color:#111">2002</div>
<div class="t" style="font-family:'Liberation Serif',serif;left:-206.8px;width:300px;text-align:right;top:263.25px;font-size:7.7px;transform:scaleY(1.12);transform-origin:0 83.75%;color:#111">287,973,924</div>
<div class="t" style="font-family:'Liberation Serif',serif;left:-164px;width:300px;text-align:right;top:263.25px;font-size:7.7px;transform:scaleY(1.12);transform-origin:0 83.75%;color:#111">1,423,677</div>
<div class="t" style="font-family:'Liberation Serif',serif;left:-131px;width:300px;text-align:right;top:263.25px;font-size:7.7px;transform:scaleY(1.12);transform-origin:0 83.75%;color:#111">494.4</div>
<div class="t" style="font-family:'Liberation Serif',serif;left:-76.6px;width:300px;text-align:right;top:263.25px;font-size:7.7px;transform:scaleY(1.12);transform-origin:0 83.75%;color:#111">16,229</div>
<div class="t" style="font-family:'Liberation Serif',serif;left:-31.69999999999999px;width:300px;text-align:right;top:263.25px;font-size:7.7px;transform:scaleY(1.12);transform-origin:0 83.75%;color:#111">5.6</div>
<div class="t" style="font-family:'Liberation Serif',serif;left:101px;width:300px;text-align:right;top:263.25px;font-size:7.7px;transform:scaleY(1.12);transform-origin:0 83.75%;color:#111">95,235</div>
<div class="t" style="font-family:'Liberation Serif',serif;left:137.7px;width:300px;text-align:right;top:263.25px;font-size:7.7px;transform:scaleY(1.12);transform-origin:0 83.75%;color:#111">33.1</div>
<div class="t" style="font-family:'Liberation Serif',serif;left:184px;width:300px;text-align:right;top:263.25px;font-size:7.7px;transform:scaleY(1.12);transform-origin:0 83.75%;color:#111">420,806</div>
<div class="t" style="font-family:'Liberation Serif',serif;left:219.5px;width:300px;text-align:right;top:263.25px;font-size:7.7px;transform:scaleY(1.12);transform-origin:0 83.75%;color:#111">146.1</div>
<div class="t" style="font-family:'Liberation Serif',serif;left:269px;width:300px;text-align:right;top:263.25px;font-size:7.7px;transform:scaleY(1.12);transform-origin:0 83.75%;color:#111">891,407</div>
<div class="t" style="font-family:'Liberation Serif',serif;left:304.6px;width:300px;text-align:right;top:263.25px;font-size:7.7px;transform:scaleY(1.12);transform-origin:0 83.75%;color:#111">309.5</div>
<div class="t" style="font-family:'Liberation Serif',serif;left:353.79999999999995px;width:300px;text-align:right;top:263.25px;font-size:7.7px;transform:scaleY(1.12);transform-origin:0 83.75%;color:#111">10,455,277</div>
<div class="t" style="font-family:'Liberation Serif',serif;left:394px;width:300px;text-align:right;top:263.25px;font-size:7.7px;transform:scaleY(1.12);transform-origin:0 83.75%;color:#111">3,630.6</div>
<div class="t" style="font-family:'Liberation Serif',serif;left:435.5px;width:300px;text-align:right;top:263.25px;font-size:7.7px;transform:scaleY(1.12);transform-origin:0 83.75%;color:#111">2,151,252</div>
<div class="t" style="font-family:'Liberation Serif',serif;left:476px;width:300px;text-align:right;top:263.25px;font-size:7.7px;transform:scaleY(1.12);transform-origin:0 83.75%;color:#111">747.0</div>
<div class="t" style="font-family:'Liberation Serif',serif;left:525.8px;width:300px;text-align:right;top:263.25px;font-size:7.7px;transform:scaleY(1.12);transform-origin:0 83.75%;color:#111">7,057,379</div>
<div class="t" style="font-family:'Liberation Serif',serif;left:566.6px;width:300px;text-align:right;top:263.25px;font-size:7.7px;transform:scaleY(1.12);transform-origin:0 83.75%;color:#111">2,450.7</div>
<div class="t" style="font-family:'Liberation Serif',serif;left:607px;width:300px;text-align:right;top:263.25px;font-size:7.7px;transform:scaleY(1.12);transform-origin:0 83.75%;color:#111">1,246,646</div>
<div class="t" style="font-family:'Liberation Serif',serif;left:639.2px;width:300px;text-align:right;top:263.25px;font-size:7.7px;transform:scaleY(1.12);transform-origin:0 83.75%;color:#111">432.9</div>
<div class="t" style="font-family:'Liberation Serif',serif;left:-115.5px;width:300px;text-align:center;top:274.25px;font-size:7.7px;transform:scaleY(1.12);transform-origin:0 83.75%;color:#111">2003</div>
<div class="t" style="font-family:'Liberation Serif',serif;left:-206.8px;width:300px;text-align:right;top:274.25px;font-size:7.7px;transform:scaleY(1.12);transform-origin:0 83.75%;color:#111">290,788,976</div>
<div class="t" style="font-family:'Liberation Serif',serif;left:-164px;width:300px;text-align:right;top:274.25px;font-size:7.7px;transform:scaleY(1.12);transform-origin:0 83.75%;color:#111">1,383,676</div>
<div class="t" style="font-family:'Liberation Serif',serif;left:-131px;width:300px;text-align:right;top:274.25px;font-size:7.7px;transform:scaleY(1.12);transform-origin:0 83.75%;color:#111">475.8</div>
<div class="t" style="font-family:'Liberation Serif',serif;left:-76.6px;width:300px;text-align:right;top:274.25px;font-size:7.7px;transform:scaleY(1.12);transform-origin:0 83.75%;color:#111">16,528</div>
<div class="t" style="font-family:'Liberation Serif',serif;left:-31.69999999999999px;width:300px;text-align:right;top:274.25px;font-size:7.7px;transform:scaleY(1.12);transform-origin:0 83.75%;color:#111">5.7</div>
<div class="t" style="font-family:'Liberation Serif',serif;left:101px;width:300px;text-align:right;top:274.25px;font-size:7.7px;transform:scaleY(1.12);transform-origin:0 83.75%;color:#111">93,883</div>
<div class="t" style="font-family:'Liberation Serif',serif;left:137.7px;width:300px;text-align:right;top:274.25px;font-size:7.7px;transform:scaleY(1.12);transform-origin:0 83.75%;color:#111">32.3</div>
<div class="t" style="font-family:'Liberation Serif',serif;left:184px;width:300px;text-align:right;top:274.25px;font-size:7.7px;transform:scaleY(1.12);transform-origin:0 83.75%;color:#111">414,235</div>
<div class="t" style="font-family:'Liberation Serif',serif;left:219.5px;width:300px;text-align:right;top:274.25px;font-size:7.7px;transform:scaleY(1.12);transform-origin:0 83.75%;color:#111">142.5</div>
<div class="t" style="font-family:'Liberation Serif',serif;left:269px;width:300px;text-align:right;top:274.25px;font-size:7.7px;transform:scaleY(1.12);transform-origin:0 83.75%;color:#111">859,030</div>
<div class="t" style="font-family:'Liberation Serif',serif;left:304.6px;width:300px;text-align:right;top:274.25px;font-size:7.7px;transform:scaleY(1.12);transform-origin:0 83.75%;color:#111">295.4</div>
<div class="t" style="font-family:'Liberation Serif',serif;left:353.79999999999995px;width:300px;text-align:right;top:274.25px;font-size:7.7px;transform:scaleY(1.12);transform-origin:0 83.75%;color:#111">10,442,862</div>
<div class="t" style="font-family:'Liberation Serif',serif;left:394px;width:300px;text-align:right;top:274.25px;font-size:7.7px;transform:scaleY(1.12);transform-origin:0 83.75%;color:#111">3,591.2</div>
<div class="t" style="font-family:'Liberation Serif',serif;left:435.5px;width:300px;text-align:right;top:274.25px;font-size:7.7px;transform:scaleY(1.12);transform-origin:0 83.75%;color:#111">2,154,834</div>
<div class="t" style="font-family:'Liberation Serif',serif;left:476px;width:300px;text-align:right;top:274.25px;font-size:7.7px;transform:scaleY(1.12);transform-origin:0 83.75%;color:#111">741.0</div>
<div class="t" style="font-family:'Liberation Serif',serif;left:525.8px;width:300px;text-align:right;top:274.25px;font-size:7.7px;transform:scaleY(1.12);transform-origin:0 83.75%;color:#111">7,026,802</div>
<div class="t" style="font-family:'Liberation Serif',serif;left:566.6px;width:300px;text-align:right;top:274.25px;font-size:7.7px;transform:scaleY(1.12);transform-origin:0 83.75%;color:#111">2,416.5</div>
<div class="t" style="font-family:'Liberation Serif',serif;left:607px;width:300px;text-align:right;top:274.25px;font-size:7.7px;transform:scaleY(1.12);transform-origin:0 83.75%;color:#111">1,261,226</div>
<div class="t" style="font-family:'Liberation Serif',serif;left:639.2px;width:300px;text-align:right;top:274.25px;font-size:7.7px;transform:scaleY(1.12);transform-origin:0 83.75%;color:#111">433.7</div>
<div class="t" style="font-family:'Liberation Serif',serif;left:-115.5px;width:300px;text-align:center;top:284.25px;font-size:7.7px;transform:scaleY(1.12);transform-origin:0 83.75%;color:#111">2004</div>
<div class="t" style="font-family:'Liberation Serif',serif;left:-206.8px;width:300px;text-align:right;top:284.25px;font-size:7.7px;transform:scaleY(1.12);transform-origin:0 83.75%;color:#111">293,656,842</div>
<div class="t" style="font-family:'Liberation Serif',serif;left:-164px;width:300px;text-align:right;top:284.25px;font-size:7.7px;transform:scaleY(1.12);transform-origin:0 83.75%;color:#111">1,360,088</div>
<div class="t" style="font-family:'Liberation Serif',serif;left:-131px;width:300px;text-align:right;top:284.25px;font-size:7.7px;transform:scaleY(1.12);transform-origin:0 83.75%;color:#111">463.2</div>
<div class="t" style="font-family:'Liberation Serif',serif;left:-76.6px;width:300px;text-align:right;top:284.25px;font-size:7.7px;transform:scaleY(1.12);transform-origin:0 83.75%;color:#111">16,148</div>
<div class="t" style="font-family:'Liberation Serif',serif;left:-31.69999999999999px;width:300px;text-align:right;top:284.25px;font-size:7.7px;transform:scaleY(1.12);transform-origin:0 83.75%;color:#111">5.5</div>
<div class="t" style="font-family:'Liberation Serif',serif;left:101px;width:300px;text-align:right;top:284.25px;font-size:7.7px;transform:scaleY(1.12);transform-origin:0 83.75%;color:#111">95,089</div>
<div class="t" style="font-family:'Liberation Serif',serif;left:137.7px;width:300px;text-align:right;top:284.25px;font-size:7.7px;transform:scaleY(1.12);transform-origin:0 83.75%;color:#111">32.4</div>
<div class="t" style="font-family:'Liberation Serif',serif;left:184px;width:300px;text-align:right;top:284.25px;font-size:7.7px;transform:scaleY(1.12);transform-origin:0 83.75%;color:#111">401,470</div>
<div class="t" style="font-family:'Liberation Serif',serif;left:219.5px;width:300px;text-align:right;top:284.25px;font-size:7.7px;transform:scaleY(1.12);transform-origin:0 83.75%;color:#111">136.7</div>
<div class="t" style="font-family:'Liberation Serif',serif;left:269px;width:300px;text-align:right;top:284.25px;font-size:7.7px;transform:scaleY(1.12);transform-origin:0 83.75%;color:#111">847,381</div>
<div class="t" style="font-family:'Liberation Serif',serif;left:304.6px;width:300px;text-align:right;top:284.25px;font-size:7.7px;transform:scaleY(1.12);transform-origin:0 83.75%;color:#111">288.6</div>
<div class="t" style="font-family:'Liberation Serif',serif;left:353.79999999999995px;width:300px;text-align:right;top:284.25px;font-size:7.7px;transform:scaleY(1.12);transform-origin:0 83.75%;color:#111">10,319,386</div>
<div class="t" style="font-family:'Liberation Serif',serif;left:394px;width:300px;text-align:right;top:284.25px;font-size:7.7px;transform:scaleY(1.12);transform-origin:0 83.75%;color:#111">3,514.1</div>
<div class="t" style="font-family:'Liberation Serif',serif;left:435.5px;width:300px;text-align:right;top:284.25px;font-size:7.7px;transform:scaleY(1.12);transform-origin:0 83.75%;color:#111">2,144,446</div>
<div class="t" style="font-family:'Liberation Serif',serif;left:476px;width:300px;text-align:right;top:284.25px;font-size:7.7px;transform:scaleY(1.12);transform-origin:0 83.75%;color:#111">730.3</div>
<div class="t" style="font-family:'Liberation Serif',serif;left:525.8px;width:300px;text-align:right;top:284.25px;font-size:7.7px;transform:scaleY(1.12);transform-origin:0 83.75%;color:#111">6,937,089</div>
<div class="t" style="font-family:'Liberation Serif',serif;left:566.6px;width:300px;text-align:right;top:284.25px;font-size:7.7px;transform:scaleY(1.12);transform-origin:0 83.75%;color:#111">2,362.3</div>
<div class="t" style="font-family:'Liberation Serif',serif;left:607px;width:300px;text-align:right;top:284.25px;font-size:7.7px;transform:scaleY(1.12);transform-origin:0 83.75%;color:#111">1,237,851</div>
<div class="t" style="font-family:'Liberation Serif',serif;left:639.2px;width:300px;text-align:right;top:284.25px;font-size:7.7px;transform:scaleY(1.12);transform-origin:0 83.75%;color:#111">421.5</div>
<div class="t" style="font-family:'Liberation Serif',serif;left:-115.5px;width:300px;text-align:center;top:295.25px;font-size:7.7px;transform:scaleY(1.12);transform-origin:0 83.75%;color:#111">2005</div>
<div class="t" style="font-family:'Liberation Serif',serif;left:-206.8px;width:300px;text-align:right;top:295.25px;font-size:7.7px;transform:scaleY(1.12);transform-origin:0 83.75%;color:#111">296,507,061</div>
<div class="t" style="font-family:'Liberation Serif',serif;left:-164px;width:300px;text-align:right;top:295.25px;font-size:7.7px;transform:scaleY(1.12);transform-origin:0 83.75%;color:#111">1,390,745</div>
<div class="t" style="font-family:'Liberation Serif',serif;left:-131px;width:300px;text-align:right;top:295.25px;font-size:7.7px;transform:scaleY(1.12);transform-origin:0 83.75%;color:#111">469.0</div>
<div class="t" style="font-family:'Liberation Serif',serif;left:-76.6px;width:300px;text-align:right;top:295.25px;font-size:7.7px;transform:scaleY(1.12);transform-origin:0 83.75%;color:#111">16,740</div>
<div class="t" style="font-family:'Liberation Serif',serif;left:-31.69999999999999px;width:300px;text-align:right;top:295.25px;font-size:7.7px;transform:scaleY(1.12);transform-origin:0 83.75%;color:#111">5.6</div>
<div class="t" style="font-family:'Liberation Serif',serif;left:101px;width:300px;text-align:right;top:295.25px;font-size:7.7px;transform:scaleY(1.12);transform-origin:0 83.75%;color:#111">94,347</div>
<div class="t" style="font-family:'Liberation Serif',serif;left:137.7px;width:300px;text-align:right;top:295.25px;font-size:7.7px;transform:scaleY(1.12);transform-origin:0 83.75%;color:#111">31.8</div>
<div class="t" style="font-family:'Liberation Serif',serif;left:184px;width:300px;text-align:right;top:295.25px;font-size:7.7px;transform:scaleY(1.12);transform-origin:0 83.75%;color:#111">417,438</div>
<div class="t" style="font-family:'Liberation Serif',serif;left:219.5px;width:300px;text-align:right;top:295.25px;font-size:7.7px;transform:scaleY(1.12);transform-origin:0 83.75%;color:#111">140.8</div>
<div class="t" style="font-family:'Liberation Serif',serif;left:269px;width:300px;text-align:right;top:295.25px;font-size:7.7px;transform:scaleY(1.12);transform-origin:0 83.75%;color:#111">862,220</div>
<div class="t" style="font-family:'Liberation Serif',serif;left:304.6px;width:300px;text-align:right;top:295.25px;font-size:7.7px;transform:scaleY(1.12);transform-origin:0 83.75%;color:#111">290.8</div>
<div class="t" style="font-family:'Liberation Serif',serif;left:353.79999999999995px;width:300px;text-align:right;top:295.25px;font-size:7.7px;transform:scaleY(1.12);transform-origin:0 83.75%;color:#111">10,174,754</div>
<div class="t" style="font-family:'Liberation Serif',serif;left:394px;width:300px;text-align:right;top:295.25px;font-size:7.7px;transform:scaleY(1.12);transform-origin:0 83.75%;color:#111">3,431.5</div>
<div class="t" style="font-family:'Liberation Serif',serif;left:435.5px;width:300px;text-align:right;top:295.25px;font-size:7.7px;transform:scaleY(1.12);transform-origin:0 83.75%;color:#111">2,155,448</div>
<div class="t" style="font-family:'Liberation Serif',serif;left:476px;width:300px;text-align:right;top:295.25px;font-size:7.7px;transform:scaleY(1.12);transform-origin:0 83.75%;color:#111">726.9</div>
<div class="t" style="font-family:'Liberation Serif',serif;left:525.8px;width:300px;text-align:right;top:295.25px;font-size:7.7px;transform:scaleY(1.12);transform-origin:0 83.75%;color:#111">6,783,447</div>
<div class="t" style="font-family:'Liberation Serif',serif;left:566.6px;width:300px;text-align:right;top:295.25px;font-size:7.7px;transform:scaleY(1.12);transform-origin:0 83.75%;color:#111">2,287.8</div>
<div class="t" style="font-family:'Liberation Serif',serif;left:607px;width:300px;text-align:right;top:295.25px;font-size:7.7px;transform:scaleY(1.12);transform-origin:0 83.75%;color:#111">1,235,859</div>
<div class="t" style="font-family:'Liberation Serif',serif;left:639.2px;width:300px;text-align:right;top:295.25px;font-size:7.7px;transform:scaleY(1.12);transform-origin:0 83.75%;color:#111">416.8</div>
<div class="t" style="font-family:'Liberation Serif',serif;left:-115.5px;width:300px;text-align:center;top:305.25px;font-size:7.7px;transform:scaleY(1.12);transform-origin:0 83.75%;color:#111">2006</div>
<div class="t" style="font-family:'Liberation Serif',serif;left:-206.8px;width:300px;text-align:right;top:305.25px;font-size:7.7px;transform:scaleY(1.12);transform-origin:0 83.75%;color:#111">299,398,484</div>
<div class="t" style="font-family:'Liberation Serif',serif;left:-164px;width:300px;text-align:right;top:305.25px;font-size:7.7px;transform:scaleY(1.12);transform-origin:0 83.75%;color:#111">1,435,123</div>
<div class="t" style="font-family:'Liberation Serif',serif;left:-131px;width:300px;text-align:right;top:305.25px;font-size:7.7px;transform:scaleY(1.12);transform-origin:0 83.75%;color:#111">479.3</div>
<div class="t" style="font-family:'Liberation Serif',serif;left:-76.6px;width:300px;text-align:right;top:305.25px;font-size:7.7px;transform:scaleY(1.12);transform-origin:0 83.75%;color:#111">17,309</div>
<div class="t" style="font-family:'Liberation Serif',serif;left:-31.69999999999999px;width:300px;text-align:right;top:305.25px;font-size:7.7px;transform:scaleY(1.12);transform-origin:0 83.75%;color:#111">5.8</div>
<div class="t" style="font-family:'Liberation Serif',serif;left:101px;width:300px;text-align:right;top:305.25px;font-size:7.7px;transform:scaleY(1.12);transform-origin:0 83.75%;color:#111">94,472</div>
<div class="t" style="font-family:'Liberation Serif',serif;left:137.7px;width:300px;text-align:right;top:305.25px;font-size:7.7px;transform:scaleY(1.12);transform-origin:0 83.75%;color:#111">31.6</div>
<div class="t" style="font-family:'Liberation Serif',serif;left:184px;width:300px;text-align:right;top:305.25px;font-size:7.7px;transform:scaleY(1.12);transform-origin:0 83.75%;color:#111">449,246</div>
<div class="t" style="font-family:'Liberation Serif',serif;left:219.5px;width:300px;text-align:right;top:305.25px;font-size:7.7px;transform:scaleY(1.12);transform-origin:0 83.75%;color:#111">150.0</div>
<div class="t" style="font-family:'Liberation Serif',serif;left:269px;width:300px;text-align:right;top:305.25px;font-size:7.7px;transform:scaleY(1.12);transform-origin:0 83.75%;color:#111">874,096</div>
<div class="t" style="font-family:'Liberation Serif',serif;left:304.6px;width:300px;text-align:right;top:305.25px;font-size:7.7px;transform:scaleY(1.12);transform-origin:0 83.75%;color:#111">292.0</div>
<div class="t" style="font-family:'Liberation Serif',serif;left:353.79999999999995px;width:300px;text-align:right;top:305.25px;font-size:7.7px;transform:scaleY(1.12);transform-origin:0 83.75%;color:#111">10,019,601</div>
<div class="t" style="font-family:'Liberation Serif',serif;left:394px;width:300px;text-align:right;top:305.25px;font-size:7.7px;transform:scaleY(1.12);transform-origin:0 83.75%;color:#111">3,346.6</div>
<div class="t" style="font-family:'Liberation Serif',serif;left:435.5px;width:300px;text-align:right;top:305.25px;font-size:7.7px;transform:scaleY(1.12);transform-origin:0 83.75%;color:#111">2,194,993</div>
<div class="t" style="font-family:'Liberation Serif',serif;left:476px;width:300px;text-align:right;top:305.25px;font-size:7.7px;transform:scaleY(1.12);transform-origin:0 83.75%;color:#111">733.1</div>
<div class="t" style="font-family:'Liberation Serif',serif;left:525.8px;width:300px;text-align:right;top:305.25px;font-size:7.7px;transform:scaleY(1.12);transform-origin:0 83.75%;color:#111">6,626,363</div>
<div class="t" style="font-family:'Liberation Serif',serif;left:566.6px;width:300px;text-align:right;top:305.25px;font-size:7.7px;transform:scaleY(1.12);transform-origin:0 83.75%;color:#111">2,213.2</div>
<div class="t" style="font-family:'Liberation Serif',serif;left:607px;width:300px;text-align:right;top:305.25px;font-size:7.7px;transform:scaleY(1.12);transform-origin:0 83.75%;color:#111">1,198,245</div>
<div class="t" style="font-family:'Liberation Serif',serif;left:639.2px;width:300px;text-align:right;top:305.25px;font-size:7.7px;transform:scaleY(1.12);transform-origin:0 83.75%;color:#111">400.2</div>
<div class="t" style="font-family:'Liberation Serif',serif;left:-115.5px;width:300px;text-align:center;top:316.25px;font-size:7.7px;transform:scaleY(1.12);transform-origin:0 83.75%;color:#111">2007</div>
<div class="t" style="font-family:'Liberation Serif',serif;left:-206.8px;width:300px;text-align:right;top:316.25px;font-size:7.7px;transform:scaleY(1.12);transform-origin:0 83.75%;color:#111">301,621,157</div>
<div class="t" style="font-family:'Liberation Serif',serif;left:-164px;width:300px;text-align:right;top:316.25px;font-size:7.7px;transform:scaleY(1.12);transform-origin:0 83.75%;color:#111">1,422,970</div>
<div class="t" style="font-family:'Liberation Serif',serif;left:-131px;width:300px;text-align:right;top:316.25px;font-size:7.7px;transform:scaleY(1.12);transform-origin:0 83.75%;color:#111">471.8</div>
<div class="t" style="font-family:'Liberation Serif',serif;left:-76.6px;width:300px;text-align:right;top:316.25px;font-size:7.7px;transform:scaleY(1.12);transform-origin:0 83.75%;color:#111">17,128</div>
<div class="t" style="font-family:'Liberation Serif',serif;left:-31.69999999999999px;width:300px;text-align:right;top:316.25px;font-size:7.7px;transform:scaleY(1.12);transform-origin:0 83.75%;color:#111">5.7</div>
<div class="t" style="font-family:'Liberation Serif',serif;left:101px;width:300px;text-align:right;top:316.25px;font-size:7.7px;transform:scaleY(1.12);transform-origin:0 83.75%;color:#111">92,160</div>
<div class="t" style="font-family:'Liberation Serif',serif;left:137.7px;width:300px;text-align:right;top:316.25px;font-size:7.7px;transform:scaleY(1.12);transform-origin:0 83.75%;color:#111">30.6</div>
<div class="t" style="font-family:'Liberation Serif',serif;left:184px;width:300px;text-align:right;top:316.25px;font-size:7.7px;transform:scaleY(1.12);transform-origin:0 83.75%;color:#111">447,324</div>
<div class="t" style="font-family:'Liberation Serif',serif;left:219.5px;width:300px;text-align:right;top:316.25px;font-size:7.7px;transform:scaleY(1.12);transform-origin:0 83.75%;color:#111">148.3</div>
<div class="t" style="font-family:'Liberation Serif',serif;left:269px;width:300px;text-align:right;top:316.25px;font-size:7.7px;transform:scaleY(1.12);transform-origin:0 83.75%;color:#111">866,358</div>
<div class="t" style="font-family:'Liberation Serif',serif;left:304.6px;width:300px;text-align:right;top:316.25px;font-size:7.7px;transform:scaleY(1.12);transform-origin:0 83.75%;color:#111">287.2</div>
<div class="t" style="font-family:'Liberation Serif',serif;left:353.79999999999995px;width:300px;text-align:right;top:316.25px;font-size:7.7px;transform:scaleY(1.12);transform-origin:0 83.75%;color:#111">9,882,212</div>
<div class="t" style="font-family:'Liberation Serif',serif;left:394px;width:300px;text-align:right;top:316.25px;font-size:7.7px;transform:scaleY(1.12);transform-origin:0 83.75%;color:#111">3,276.4</div>
<div class="t" style="font-family:'Liberation Serif',serif;left:435.5px;width:300px;text-align:right;top:316.25px;font-size:7.7px;transform:scaleY(1.12);transform-origin:0 83.75%;color:#111">2,190,198</div>
<div class="t" style="font-family:'Liberation Serif',serif;left:476px;width:300px;text-align:right;top:316.25px;font-size:7.7px;transform:scaleY(1.12);transform-origin:0 83.75%;color:#111">726.1</div>
<div class="t" style="font-family:'Liberation Serif',serif;left:525.8px;width:300px;text-align:right;top:316.25px;font-size:7.7px;transform:scaleY(1.12);transform-origin:0 83.75%;color:#111">6,591,542</div>
<div class="t" style="font-family:'Liberation Serif',serif;left:566.6px;width:300px;text-align:right;top:316.25px;font-size:7.7px;transform:scaleY(1.12);transform-origin:0 83.75%;color:#111">2,185.4</div>
<div class="t" style="font-family:'Liberation Serif',serif;left:607px;width:300px;text-align:right;top:316.25px;font-size:7.7px;transform:scaleY(1.12);transform-origin:0 83.75%;color:#111">1,100,472</div>
<div class="t" style="font-family:'Liberation Serif',serif;left:639.2px;width:300px;text-align:right;top:316.25px;font-size:7.7px;transform:scaleY(1.12);transform-origin:0 83.75%;color:#111">364.9</div>
<div class="t" style="font-family:'Liberation Serif',serif;left:-115.5px;width:300px;text-align:center;top:326.25px;font-size:7.7px;transform:scaleY(1.12);transform-origin:0 83.75%;color:#111">2008</div>
<div class="t" style="font-family:'Liberation Serif',serif;left:-206.8px;width:300px;text-align:right;top:326.25px;font-size:7.7px;transform:scaleY(1.12);transform-origin:0 83.75%;color:#111">304,059,724</div>
<div class="t" style="font-family:'Liberation Serif',serif;left:-164px;width:300px;text-align:right;top:326.25px;font-size:7.7px;transform:scaleY(1.12);transform-origin:0 83.75%;color:#111">1,394,461</div>
<div class="t" style="font-family:'Liberation Serif',serif;left:-131px;width:300px;text-align:right;top:326.25px;font-size:7.7px;transform:scaleY(1.12);transform-origin:0 83.75%;color:#111">458.6</div>
<div class="t" style="font-family:'Liberation Serif',serif;left:-76.6px;width:300px;text-align:right;top:326.25px;font-size:7.7px;transform:scaleY(1.12);transform-origin:0 83.75%;color:#111">16,465</div>
<div class="t" style="font-family:'Liberation Serif',serif;left:-31.69999999999999px;width:300px;text-align:right;top:326.25px;font-size:7.7px;transform:scaleY(1.12);transform-origin:0 83.75%;color:#111">5.4</div>
<div class="t" style="font-family:'Liberation Serif',serif;left:101px;width:300px;text-align:right;top:326.25px;font-size:7.7px;transform:scaleY(1.12);transform-origin:0 83.75%;color:#111">90,750</div>
<div class="t" style="font-family:'Liberation Serif',serif;left:137.7px;width:300px;text-align:right;top:326.25px;font-size:7.7px;transform:scaleY(1.12);transform-origin:0 83.75%;color:#111">29.8</div>
<div class="t" style="font-family:'Liberation Serif',serif;left:184px;width:300px;text-align:right;top:326.25px;font-size:7.7px;transform:scaleY(1.12);transform-origin:0 83.75%;color:#111">443,563</div>
<div class="t" style="font-family:'Liberation Serif',serif;left:219.5px;width:300px;text-align:right;top:326.25px;font-size:7.7px;transform:scaleY(1.12);transform-origin:0 83.75%;color:#111">145.9</div>
<div class="t" style="font-family:'Liberation Serif',serif;left:269px;width:300px;text-align:right;top:326.25px;font-size:7.7px;transform:scaleY(1.12);transform-origin:0 83.75%;color:#111">843,683</div>
<div class="t" style="font-family:'Liberation Serif',serif;left:304.6px;width:300px;text-align:right;top:326.25px;font-size:7.7px;transform:scaleY(1.12);transform-origin:0 83.75%;color:#111">277.5</div>
<div class="t" style="font-family:'Liberation Serif',serif;left:353.79999999999995px;width:300px;text-align:right;top:326.25px;font-size:7.7px;transform:scaleY(1.12);transform-origin:0 83.75%;color:#111">9,774,152</div>
<div class="t" style="font-family:'Liberation Serif',serif;left:394px;width:300px;text-align:right;top:326.25px;font-size:7.7px;transform:scaleY(1.12);transform-origin:0 83.75%;color:#111">3,214.6</div>
<div class="t" style="font-family:'Liberation Serif',serif;left:435.5px;width:300px;text-align:right;top:326.25px;font-size:7.7px;transform:scaleY(1.12);transform-origin:0 83.75%;color:#111">2,228,887</div>
<div class="t" style="font-family:'Liberation Serif',serif;left:476px;width:300px;text-align:right;top:326.25px;font-size:7.7px;transform:scaleY(1.12);transform-origin:0 83.75%;color:#111">733.0</div>
<div class="t" style="font-family:'Liberation Serif',serif;left:525.8px;width:300px;text-align:right;top:326.25px;font-size:7.7px;transform:scaleY(1.12);transform-origin:0 83.75%;color:#111">6,586,206</div>
<div class="t" style="font-family:'Liberation Serif',serif;left:566.6px;width:300px;text-align:right;top:326.25px;font-size:7.7px;transform:scaleY(1.12);transform-origin:0 83.75%;color:#111">2,166.1</div>
<div class="t" style="font-family:'Liberation Serif',serif;left:607px;width:300px;text-align:right;top:326.25px;font-size:7.7px;transform:scaleY(1.12);transform-origin:0 83.75%;color:#111">959,059</div>
<div class="t" style="font-family:'Liberation Serif',serif;left:639.2px;width:300px;text-align:right;top:326.25px;font-size:7.7px;transform:scaleY(1.12);transform-origin:0 83.75%;color:#111">315.4</div>
<div class="t" style="font-family:'Liberation Serif',serif;left:-115.5px;width:300px;text-align:center;top:337.25px;font-size:7.7px;transform:scaleY(1.12);transform-origin:0 83.75%;color:#111">2009</div>
<div class="t" style="font-family:'Liberation Serif',serif;left:-206.8px;width:300px;text-align:right;top:337.25px;font-size:7.7px;transform:scaleY(1.12);transform-origin:0 83.75%;color:#111">307,006,550</div>
<div class="t" style="font-family:'Liberation Serif',serif;left:-164px;width:300px;text-align:right;top:337.25px;font-size:7.7px;transform:scaleY(1.12);transform-origin:0 83.75%;color:#111">1,325,896</div>
<div class="t" style="font-family:'Liberation Serif',serif;left:-131px;width:300px;text-align:right;top:337.25px;font-size:7.7px;transform:scaleY(1.12);transform-origin:0 83.75%;color:#111">431.9</div>
<div class="t" style="font-family:'Liberation Serif',serif;left:-76.6px;width:300px;text-align:right;top:337.25px;font-size:7.7px;transform:scaleY(1.12);transform-origin:0 83.75%;color:#111">15,399</div>
<div class="t" style="font-family:'Liberation Serif',serif;left:-31.69999999999999px;width:300px;text-align:right;top:337.25px;font-size:7.7px;transform:scaleY(1.12);transform-origin:0 83.75%;color:#111">5.0</div>
<div class="t" style="font-family:'Liberation Serif',serif;left:101px;width:300px;text-align:right;top:337.25px;font-size:7.7px;transform:scaleY(1.12);transform-origin:0 83.75%;color:#111">89,241</div>
<div class="t" style="font-family:'Liberation Serif',serif;left:137.7px;width:300px;text-align:right;top:337.25px;font-size:7.7px;transform:scaleY(1.12);transform-origin:0 83.75%;color:#111">29.1</div>
<div class="t" style="font-family:'Liberation Serif',serif;left:184px;width:300px;text-align:right;top:337.25px;font-size:7.7px;transform:scaleY(1.12);transform-origin:0 83.75%;color:#111">408,742</div>
<div class="t" style="font-family:'Liberation Serif',serif;left:219.5px;width:300px;text-align:right;top:337.25px;font-size:7.7px;transform:scaleY(1.12);transform-origin:0 83.75%;color:#111">133.1</div>
<div class="t" style="font-family:'Liberation Serif',serif;left:269px;width:300px;text-align:right;top:337.25px;font-size:7.7px;transform:scaleY(1.12);transform-origin:0 83.75%;color:#111">812,514</div>
<div class="t" style="font-family:'Liberation Serif',serif;left:304.6px;width:300px;text-align:right;top:337.25px;font-size:7.7px;transform:scaleY(1.12);transform-origin:0 83.75%;color:#111">264.7</div>
<div class="t" style="font-family:'Liberation Serif',serif;left:353.79999999999995px;width:300px;text-align:right;top:337.25px;font-size:7.7px;transform:scaleY(1.12);transform-origin:0 83.75%;color:#111">9,337,060</div>
<div class="t" style="font-family:'Liberation Serif',serif;left:394px;width:300px;text-align:right;top:337.25px;font-size:7.7px;transform:scaleY(1.12);transform-origin:0 83.75%;color:#111">3,041.3</div>
<div class="t" style="font-family:'Liberation Serif',serif;left:435.5px;width:300px;text-align:right;top:337.25px;font-size:7.7px;transform:scaleY(1.12);transform-origin:0 83.75%;color:#111">2,203,313</div>
<div class="t" style="font-family:'Liberation Serif',serif;left:476px;width:300px;text-align:right;top:337.25px;font-size:7.7px;transform:scaleY(1.12);transform-origin:0 83.75%;color:#111">717.7</div>
<div class="t" style="font-family:'Liberation Serif',serif;left:525.8px;width:300px;text-align:right;top:337.25px;font-size:7.7px;transform:scaleY(1.12);transform-origin:0 83.75%;color:#111">6,338,095</div>
<div class="t" style="font-family:'Liberation Serif',serif;left:566.6px;width:300px;text-align:right;top:337.25px;font-size:7.7px;transform:scaleY(1.12);transform-origin:0 83.75%;color:#111">2,064.5</div>
<div class="t" style="font-family:'Liberation Serif',serif;left:607px;width:300px;text-align:right;top:337.25px;font-size:7.7px;transform:scaleY(1.12);transform-origin:0 83.75%;color:#111">795,652</div>
<div class="t" style="font-family:'Liberation Serif',serif;left:639.2px;width:300px;text-align:right;top:337.25px;font-size:7.7px;transform:scaleY(1.12);transform-origin:0 83.75%;color:#111">259.2</div>
<div class="t" style="font-family:'Liberation Serif',serif;left:-115.5px;width:300px;text-align:center;top:347.25px;font-size:7.7px;transform:scaleY(1.12);transform-origin:0 83.75%;color:#111">2010</div>
<div class="t" style="font-family:'Liberation Serif',serif;left:-206.8px;width:300px;text-align:right;top:347.25px;font-size:7.7px;transform:scaleY(1.12);transform-origin:0 83.75%;color:#111">309,330,219</div>
<div class="t" style="font-family:'Liberation Serif',serif;left:-164px;width:300px;text-align:right;top:347.25px;font-size:7.7px;transform:scaleY(1.12);transform-origin:0 83.75%;color:#111">1,251,248</div>
<div class="t" style="font-family:'Liberation Serif',serif;left:-131px;width:300px;text-align:right;top:347.25px;font-size:7.7px;transform:scaleY(1.12);transform-origin:0 83.75%;color:#111">404.5</div>
<div class="t" style="font-family:'Liberation Serif',serif;left:-76.6px;width:300px;text-align:right;top:347.25px;font-size:7.7px;transform:scaleY(1.12);transform-origin:0 83.75%;color:#111">14,722</div>
<div class="t" style="font-family:'Liberation Serif',serif;left:-31.69999999999999px;width:300px;text-align:right;top:347.25px;font-size:7.7px;transform:scaleY(1.12);transform-origin:0 83.75%;color:#111">4.8</div>
<div class="t" style="font-family:'Liberation Serif',serif;left:101px;width:300px;text-align:right;top:347.25px;font-size:7.7px;transform:scaleY(1.12);transform-origin:0 83.75%;color:#111">85,593</div>
<div class="t" style="font-family:'Liberation Serif',serif;left:137.7px;width:300px;text-align:right;top:347.25px;font-size:7.7px;transform:scaleY(1.12);transform-origin:0 83.75%;color:#111">27.7</div>
<div class="t" style="font-family:'Liberation Serif',serif;left:184px;width:300px;text-align:right;top:347.25px;font-size:7.7px;transform:scaleY(1.12);transform-origin:0 83.75%;color:#111">369,089</div>
<div class="t" style="font-family:'Liberation Serif',serif;left:219.5px;width:300px;text-align:right;top:347.25px;font-size:7.7px;transform:scaleY(1.12);transform-origin:0 83.75%;color:#111">119.3</div>
<div class="t" style="font-family:'Liberation Serif',serif;left:269px;width:300px;text-align:right;top:347.25px;font-size:7.7px;transform:scaleY(1.12);transform-origin:0 83.75%;color:#111">781,844</div>
<div class="t" style="font-family:'Liberation Serif',serif;left:304.6px;width:300px;text-align:right;top:347.25px;font-size:7.7px;transform:scaleY(1.12);transform-origin:0 83.75%;color:#111">252.8</div>
<div class="t" style="font-family:'Liberation Serif',serif;left:353.79999999999995px;width:300px;text-align:right;top:347.25px;font-size:7.7px;transform:scaleY(1.12);transform-origin:0 83.75%;color:#111">9,112,625</div>
<div class="t" style="font-family:'Liberation Serif',serif;left:394px;width:300px;text-align:right;top:347.25px;font-size:7.7px;transform:scaleY(1.12);transform-origin:0 83.75%;color:#111">2,945.9</div>
<div class="t" style="font-family:'Liberation Serif',serif;left:435.5px;width:300px;text-align:right;top:347.25px;font-size:7.7px;transform:scaleY(1.12);transform-origin:0 83.75%;color:#111">2,168,459</div>
<div class="t" style="font-family:'Liberation Serif',serif;left:476px;width:300px;text-align:right;top:347.25px;font-size:7.7px;transform:scaleY(1.12);transform-origin:0 83.75%;color:#111">701.0</div>
<div class="t" style="font-family:'Liberation Serif',serif;left:525.8px;width:300px;text-align:right;top:347.25px;font-size:7.7px;transform:scaleY(1.12);transform-origin:0 83.75%;color:#111">6,204,601</div>
<div class="t" style="font-family:'Liberation Serif',serif;left:566.6px;width:300px;text-align:right;top:347.25px;font-size:7.7px;transform:scaleY(1.12);transform-origin:0 83.75%;color:#111">2,005.8</div>
<div class="t" style="font-family:'Liberation Serif',serif;left:607px;width:300px;text-align:right;top:347.25px;font-size:7.7px;transform:scaleY(1.12);transform-origin:0 83.75%;color:#111">739,565</div>
<div class="t" style="font-family:'Liberation Serif',serif;left:639.2px;width:300px;text-align:right;top:347.25px;font-size:7.7px;transform:scaleY(1.12);transform-origin:0 83.75%;color:#111">239.1</div>
<div class="t" style="font-family:'Liberation Serif',serif;left:-115.5px;width:300px;text-align:center;top:358.25px;font-size:7.7px;transform:scaleY(1.12);transform-origin:0 83.75%;color:#111">2011</div>
<div class="t" style="font-family:'Liberation Serif',serif;left:-206.8px;width:300px;text-align:right;top:358.25px;font-size:7.7px;transform:scaleY(1.12);transform-origin:0 83.75%;color:#111">311,587,816</div>
<div class="t" style="font-family:'Liberation Serif',serif;left:-164px;width:300px;text-align:right;top:358.25px;font-size:7.7px;transform:scaleY(1.12);transform-origin:0 83.75%;color:#111">1,206,005</div>
<div class="t" style="font-family:'Liberation Serif',serif;left:-131px;width:300px;text-align:right;top:358.25px;font-size:7.7px;transform:scaleY(1.12);transform-origin:0 83.75%;color:#111">387.1</div>
<div class="t" style="font-family:'Liberation Serif',serif;left:-76.6px;width:300px;text-align:right;top:358.25px;font-size:7.7px;transform:scaleY(1.12);transform-origin:0 83.75%;color:#111">14,661</div>
<div class="t" style="font-family:'Liberation Serif',serif;left:-31.69999999999999px;width:300px;text-align:right;top:358.25px;font-size:7.7px;transform:scaleY(1.12);transform-origin:0 83.75%;color:#111">4.7</div>
<div class="t" style="font-family:'Liberation Serif',serif;left:101px;width:300px;text-align:right;top:358.25px;font-size:7.7px;transform:scaleY(1.12);transform-origin:0 83.75%;color:#111">84,175</div>
<div class="t" style="font-family:'Liberation Serif',serif;left:137.7px;width:300px;text-align:right;top:358.25px;font-size:7.7px;transform:scaleY(1.12);transform-origin:0 83.75%;color:#111">27.0</div>
<div class="t" style="font-family:'Liberation Serif',serif;left:184px;width:300px;text-align:right;top:358.25px;font-size:7.7px;transform:scaleY(1.12);transform-origin:0 83.75%;color:#111">354,746</div>
<div class="t" style="font-family:'Liberation Serif',serif;left:219.5px;width:300px;text-align:right;top:358.25px;font-size:7.7px;transform:scaleY(1.12);transform-origin:0 83.75%;color:#111">113.9</div>
<div class="t" style="font-family:'Liberation Serif',serif;left:269px;width:300px;text-align:right;top:358.25px;font-size:7.7px;transform:scaleY(1.12);transform-origin:0 83.75%;color:#111">752,423</div>
<div class="t" style="font-family:'Liberation Serif',serif;left:304.6px;width:300px;text-align:right;top:358.25px;font-size:7.7px;transform:scaleY(1.12);transform-origin:0 83.75%;color:#111">241.5</div>
<div class="t" style="font-family:'Liberation Serif',serif;left:353.79999999999995px;width:300px;text-align:right;top:358.25px;font-size:7.7px;transform:scaleY(1.12);transform-origin:0 83.75%;color:#111">9,052,743</div>
<div class="t" style="font-family:'Liberation Serif',serif;left:394px;width:300px;text-align:right;top:358.25px;font-size:7.7px;transform:scaleY(1.12);transform-origin:0 83.75%;color:#111">2,905.4</div>
<div class="t" style="font-family:'Liberation Serif',serif;left:435.5px;width:300px;text-align:right;top:358.25px;font-size:7.7px;transform:scaleY(1.12);transform-origin:0 83.75%;color:#111">2,185,140</div>
<div class="t" style="font-family:'Liberation Serif',serif;left:476px;width:300px;text-align:right;top:358.25px;font-size:7.7px;transform:scaleY(1.12);transform-origin:0 83.75%;color:#111">701.3</div>
<div class="t" style="font-family:'Liberation Serif',serif;left:525.8px;width:300px;text-align:right;top:358.25px;font-size:7.7px;transform:scaleY(1.12);transform-origin:0 83.75%;color:#111">6,151,095</div>
<div class="t" style="font-family:'Liberation Serif',serif;left:566.6px;width:300px;text-align:right;top:358.25px;font-size:7.7px;transform:scaleY(1.12);transform-origin:0 83.75%;color:#111">1,974.1</div>
<div class="t" style="font-family:'Liberation Serif',serif;left:607px;width:300px;text-align:right;top:358.25px;font-size:7.7px;transform:scaleY(1.12);transform-origin:0 83.75%;color:#111">716,508</div>
<div class="t" style="font-family:'Liberation Serif',serif;left:639.2px;width:300px;text-align:right;top:358.25px;font-size:7.7px;transform:scaleY(1.12);transform-origin:0 83.75%;color:#111">230.0</div>
<div class="t" style="font-family:'Liberation Serif',serif;left:-115.5px;width:300px;text-align:center;top:368.25px;font-size:7.7px;transform:scaleY(1.12);transform-origin:0 83.75%;color:#111">2012</div>
<div class="t" style="font-family:'Liberation Serif',serif;left:-206.8px;width:300px;text-align:right;top:368.25px;font-size:7.7px;transform:scaleY(1.12);transform-origin:0 83.75%;color:#111">313,873,685</div>
<div class="t" style="font-family:'Liberation Serif',serif;left:-164px;width:300px;text-align:right;top:368.25px;font-size:7.7px;transform:scaleY(1.12);transform-origin:0 83.75%;color:#111">1,217,057</div>
<div class="t" style="font-family:'Liberation Serif',serif;left:-131px;width:300px;text-align:right;top:368.25px;font-size:7.7px;transform:scaleY(1.12);transform-origin:0 83.75%;color:#111">387.8</div>
<div class="t" style="font-family:'Liberation Serif',serif;left:-76.6px;width:300px;text-align:right;top:368.25px;font-size:7.7px;transform:scaleY(1.12);transform-origin:0 83.75%;color:#111">14,856</div>
<div class="t" style="font-family:'Liberation Serif',serif;left:-31.69999999999999px;width:300px;text-align:right;top:368.25px;font-size:7.7px;transform:scaleY(1.12);transform-origin:0 83.75%;color:#111">4.7</div>
<div class="t" style="font-family:'Liberation Serif',serif;left:101px;width:300px;text-align:right;top:368.25px;font-size:7.7px;transform:scaleY(1.12);transform-origin:0 83.75%;color:#111">85,141</div>
<div class="t" style="font-family:'Liberation Serif',serif;left:137.7px;width:300px;text-align:right;top:368.25px;font-size:7.7px;transform:scaleY(1.12);transform-origin:0 83.75%;color:#111">27.1</div>
<div class="t" style="font-family:'Liberation Serif',serif;left:184px;width:300px;text-align:right;top:368.25px;font-size:7.7px;transform:scaleY(1.12);transform-origin:0 83.75%;color:#111">355,051</div>
<div class="t" style="font-family:'Liberation Serif',serif;left:219.5px;width:300px;text-align:right;top:368.25px;font-size:7.7px;transform:scaleY(1.12);transform-origin:0 83.75%;color:#111">113.1</div>
<div class="t" style="font-family:'Liberation Serif',serif;left:269px;width:300px;text-align:right;top:368.25px;font-size:7.7px;transform:scaleY(1.12);transform-origin:0 83.75%;color:#111">762,009</div>
<div class="t" style="font-family:'Liberation Serif',serif;left:304.6px;width:300px;text-align:right;top:368.25px;font-size:7.7px;transform:scaleY(1.12);transform-origin:0 83.75%;color:#111">242.8</div>
<div class="t" style="font-family:'Liberation Serif',serif;left:353.79999999999995px;width:300px;text-align:right;top:368.25px;font-size:7.7px;transform:scaleY(1.12);transform-origin:0 83.75%;color:#111">9,001,992</div>
<div class="t" style="font-family:'Liberation Serif',serif;left:394px;width:300px;text-align:right;top:368.25px;font-size:7.7px;transform:scaleY(1.12);transform-origin:0 83.75%;color:#111">2,868.0</div>
<div class="t" style="font-family:'Liberation Serif',serif;left:435.5px;width:300px;text-align:right;top:368.25px;font-size:7.7px;transform:scaleY(1.12);transform-origin:0 83.75%;color:#111">2,109,932</div>
<div class="t" style="font-family:'Liberation Serif',serif;left:476px;width:300px;text-align:right;top:368.25px;font-size:7.7px;transform:scaleY(1.12);transform-origin:0 83.75%;color:#111">672.2</div>
<div class="t" style="font-family:'Liberation Serif',serif;left:525.8px;width:300px;text-align:right;top:368.25px;font-size:7.7px;transform:scaleY(1.12);transform-origin:0 83.75%;color:#111">6,168,874</div>
<div class="t" style="font-family:'Liberation Serif',serif;left:566.6px;width:300px;text-align:right;top:368.25px;font-size:7.7px;transform:scaleY(1.12);transform-origin:0 83.75%;color:#111">1,965.4</div>
<div class="t" style="font-family:'Liberation Serif',serif;left:607px;width:300px;text-align:right;top:368.25px;font-size:7.7px;transform:scaleY(1.12);transform-origin:0 83.75%;color:#111">723,186</div>
<div class="t" style="font-family:'Liberation Serif',serif;left:639.2px;width:300px;text-align:right;top:368.25px;font-size:7.7px;transform:scaleY(1.12);transform-origin:0 83.75%;color:#111">230.4</div>
<div class="t" style="font-family:'Liberation Serif',serif;left:-115.5px;width:300px;text-align:center;top:379.25px;font-size:7.7px;transform:scaleY(1.12);transform-origin:0 83.75%;color:#111">2013</div>
<div class="t" style="font-family:'Liberation Serif',serif;left:-206.8px;width:300px;text-align:right;top:379.25px;font-size:7.7px;transform:scaleY(1.12);transform-origin:0 83.75%;color:#111">316,497,531</div>
<div class="t" style="font-family:'Liberation Serif',serif;left:-164px;width:300px;text-align:right;top:379.25px;font-size:7.7px;transform:scaleY(1.12);transform-origin:0 83.75%;color:#111">1,168,298</div>
<div class="t" style="font-family:'Liberation Serif',serif;left:-131px;width:300px;text-align:right;top:379.25px;font-size:7.7px;transform:scaleY(1.12);transform-origin:0 83.75%;color:#111">369.1</div>
<div class="t" style="font-family:'Liberation Serif',serif;left:-76.6px;width:300px;text-align:right;top:379.25px;font-size:7.7px;transform:scaleY(1.12);transform-origin:0 83.75%;color:#111">14,319</div>
<div class="t" style="font-family:'Liberation Serif',serif;left:-31.69999999999999px;width:300px;text-align:right;top:379.25px;font-size:7.7px;transform:scaleY(1.12);transform-origin:0 83.75%;color:#111">4.5</div>
<div class="t" style="font-family:'Liberation Serif',serif;left:15.699999999999989px;width:300px;text-align:right;top:379.25px;font-size:7.7px;transform:scaleY(1.12);transform-origin:0 83.75%;color:#111">113,695</div>
<div class="t" style="font-family:'Liberation Serif',serif;left:51.25px;width:300px;text-align:right;top:379.25px;font-size:7.7px;transform:scaleY(1.12);transform-origin:0 83.75%;color:#111">35.9</div>
<div class="t" style="font-family:'Liberation Serif',serif;left:101px;width:300px;text-align:right;top:379.25px;font-size:7.7px;transform:scaleY(1.12);transform-origin:0 83.75%;color:#111">82,109</div>
<div class="t" style="font-family:'Liberation Serif',serif;left:137.7px;width:300px;text-align:right;top:379.25px;font-size:7.7px;transform:scaleY(1.12);transform-origin:0 83.75%;color:#111">25.9</div>
<div class="t" style="font-family:'Liberation Serif',serif;left:184px;width:300px;text-align:right;top:379.25px;font-size:7.7px;transform:scaleY(1.12);transform-origin:0 83.75%;color:#111">345,093</div>
<div class="t" style="font-family:'Liberation Serif',serif;left:219.5px;width:300px;text-align:right;top:379.25px;font-size:7.7px;transform:scaleY(1.12);transform-origin:0 83.75%;color:#111">109.0</div>
<div class="t" style="font-family:'Liberation Serif',serif;left:269px;width:300px;text-align:right;top:379.25px;font-size:7.7px;transform:scaleY(1.12);transform-origin:0 83.75%;color:#111">726,777</div>
<div class="t" style="font-family:'Liberation Serif',serif;left:304.6px;width:300px;text-align:right;top:379.25px;font-size:7.7px;transform:scaleY(1.12);transform-origin:0 83.75%;color:#111">229.6</div>
<div class="t" style="font-family:'Liberation Serif',serif;left:353.79999999999995px;width:300px;text-align:right;top:379.25px;font-size:7.7px;transform:scaleY(1.12);transform-origin:0 83.75%;color:#111">8,651,892</div>
<div class="t" style="font-family:'Liberation Serif',serif;left:394px;width:300px;text-align:right;top:379.25px;font-size:7.7px;transform:scaleY(1.12);transform-origin:0 83.75%;color:#111">2,733.6</div>
<div class="t" style="font-family:'Liberation Serif',serif;left:435.5px;width:300px;text-align:right;top:379.25px;font-size:7.7px;transform:scaleY(1.12);transform-origin:0 83.75%;color:#111">1,932,139</div>
<div class="t" style="font-family:'Liberation Serif',serif;left:476px;width:300px;text-align:right;top:379.25px;font-size:7.7px;transform:scaleY(1.12);transform-origin:0 83.75%;color:#111">610.5</div>
<div class="t" style="font-family:'Liberation Serif',serif;left:525.8px;width:300px;text-align:right;top:379.25px;font-size:7.7px;transform:scaleY(1.12);transform-origin:0 83.75%;color:#111">6,019,465</div>
<div class="t" style="font-family:'Liberation Serif',serif;left:566.6px;width:300px;text-align:right;top:379.25px;font-size:7.7px;transform:scaleY(1.12);transform-origin:0 83.75%;color:#111">1,901.9</div>
<div class="t" style="font-family:'Liberation Serif',serif;left:607px;width:300px;text-align:right;top:379.25px;font-size:7.7px;transform:scaleY(1.12);transform-origin:0 83.75%;color:#111">700,288</div>
<div class="t" style="font-family:'Liberation Serif',serif;left:639.2px;width:300px;text-align:right;top:379.25px;font-size:7.7px;transform:scaleY(1.12);transform-origin:0 83.75%;color:#111">221.3</div>
<div class="t" style="font-family:'Liberation Serif',serif;left:-115.5px;width:300px;text-align:center;top:390.25px;font-size:7.7px;transform:scaleY(1.12);transform-origin:0 83.75%;color:#111">2014</div>
<div class="t" style="font-family:'Liberation Serif',serif;left:-206.8px;width:300px;text-align:right;top:390.25px;font-size:7.7px;transform:scaleY(1.12);transform-origin:0 83.75%;color:#111">318,907,401</div>
<div class="t" style="font-family:'Liberation Serif',serif;left:-164px;width:300px;text-align:right;top:390.25px;font-size:7.7px;transform:scaleY(1.12);transform-origin:0 83.75%;color:#111">1,153,022</div>
<div class="t" style="font-family:'Liberation Serif',serif;left:-131px;width:300px;text-align:right;top:390.25px;font-size:7.7px;transform:scaleY(1.12);transform-origin:0 83.75%;color:#111">361.6</div>
<div class="t" style="font-family:'Liberation Serif',serif;left:-76.6px;width:300px;text-align:right;top:390.25px;font-size:7.7px;transform:scaleY(1.12);transform-origin:0 83.75%;color:#111">14,164</div>
<div class="t" style="font-family:'Liberation Serif',serif;left:-31.69999999999999px;width:300px;text-align:right;top:390.25px;font-size:7.7px;transform:scaleY(1.12);transform-origin:0 83.75%;color:#111">4.4</div>
<div class="t" style="font-family:'Liberation Serif',serif;left:15.699999999999989px;width:300px;text-align:right;top:390.25px;font-size:7.7px;transform:scaleY(1.12);transform-origin:0 83.75%;color:#111">118,027</div>
<div class="t" style="font-family:'Liberation Serif',serif;left:51.25px;width:300px;text-align:right;top:390.25px;font-size:7.7px;transform:scaleY(1.12);transform-origin:0 83.75%;color:#111">37.0</div>
<div class="t" style="font-family:'Liberation Serif',serif;left:101px;width:300px;text-align:right;top:390.25px;font-size:7.7px;transform:scaleY(1.12);transform-origin:0 83.75%;color:#111">84,864</div>
<div class="t" style="font-family:'Liberation Serif',serif;left:137.7px;width:300px;text-align:right;top:390.25px;font-size:7.7px;transform:scaleY(1.12);transform-origin:0 83.75%;color:#111">26.6</div>
<div class="t" style="font-family:'Liberation Serif',serif;left:184px;width:300px;text-align:right;top:390.25px;font-size:7.7px;transform:scaleY(1.12);transform-origin:0 83.75%;color:#111">322,905</div>
<div class="t" style="font-family:'Liberation Serif',serif;left:219.5px;width:300px;text-align:right;top:390.25px;font-size:7.7px;transform:scaleY(1.12);transform-origin:0 83.75%;color:#111">101.3</div>
<div class="t" style="font-family:'Liberation Serif',serif;left:269px;width:300px;text-align:right;top:390.25px;font-size:7.7px;transform:scaleY(1.12);transform-origin:0 83.75%;color:#111">731,089</div>
<div class="t" style="font-family:'Liberation Serif',serif;left:304.6px;width:300px;text-align:right;top:390.25px;font-size:7.7px;transform:scaleY(1.12);transform-origin:0 83.75%;color:#111">229.2</div>
<div class="t" style="font-family:'Liberation Serif',serif;left:353.79999999999995px;width:300px;text-align:right;top:390.25px;font-size:7.7px;transform:scaleY(1.12);transform-origin:0 83.75%;color:#111">8,209,010</div>
<div class="t" style="font-family:'Liberation Serif',serif;left:394px;width:300px;text-align:right;top:390.25px;font-size:7.7px;transform:scaleY(1.12);transform-origin:0 83.75%;color:#111">2,574.1</div>
<div class="t" style="font-family:'Liberation Serif',serif;left:435.5px;width:300px;text-align:right;top:390.25px;font-size:7.7px;transform:scaleY(1.12);transform-origin:0 83.75%;color:#111">1,713,153</div>
<div class="t" style="font-family:'Liberation Serif',serif;left:476px;width:300px;text-align:right;top:390.25px;font-size:7.7px;transform:scaleY(1.12);transform-origin:0 83.75%;color:#111">537.2</div>
<div class="t" style="font-family:'Liberation Serif',serif;left:525.8px;width:300px;text-align:right;top:390.25px;font-size:7.7px;transform:scaleY(1.12);transform-origin:0 83.75%;color:#111">5,809,054</div>
<div class="t" style="font-family:'Liberation Serif',serif;left:566.6px;width:300px;text-align:right;top:390.25px;font-size:7.7px;transform:scaleY(1.12);transform-origin:0 83.75%;color:#111">1,821.5</div>
<div class="t" style="font-family:'Liberation Serif',serif;left:607px;width:300px;text-align:right;top:390.25px;font-size:7.7px;transform:scaleY(1.12);transform-origin:0 83.75%;color:#111">686,803</div>
<div class="t" style="font-family:'Liberation Serif',serif;left:639.2px;width:300px;text-align:right;top:390.25px;font-size:7.7px;transform:scaleY(1.12);transform-origin:0 83.75%;color:#111">215.4</div>
<div class="t" style="font-family:'Liberation Serif',serif;left:-115.5px;width:300px;text-align:center;top:402.25px;font-size:7.7px;transform:scaleY(1.12);transform-origin:0 83.75%;color:#111">2015</div>
<div class="t" style="font-family:'Liberation Serif',serif;left:42.5px;top:400.98px;font-size:5.4px;transform:scaleY(1.12);transform-origin:0 83.75%;color:#111">6</div>
<div class="t" style="font-family:'Liberation Serif',serif;left:-206.8px;width:300px;text-align:right;top:402.25px;font-size:7.7px;transform:scaleY(1.12);transform-origin:0 83.75%;color:#111">320,896,618</div>
<div class="t" style="font-family:'Liberation Serif',serif;left:-164px;width:300px;text-align:right;top:402.25px;font-size:7.7px;transform:scaleY(1.12);transform-origin:0 83.75%;color:#111">1,199,310</div>
<div class="t" style="font-family:'Liberation Serif',serif;left:-131px;width:300px;text-align:right;top:402.25px;font-size:7.7px;transform:scaleY(1.12);transform-origin:0 83.75%;color:#111">373.7</div>
<div class="t" style="font-family:'Liberation Serif',serif;left:-76.6px;width:300px;text-align:right;top:402.25px;font-size:7.7px;transform:scaleY(1.12);transform-origin:0 83.75%;color:#111">15,883</div>
<div class="t" style="font-family:'Liberation Serif',serif;left:-31.69999999999999px;width:300px;text-align:right;top:402.25px;font-size:7.7px;transform:scaleY(1.12);transform-origin:0 83.75%;color:#111">4.9</div>
<div class="t" style="font-family:'Liberation Serif',serif;left:15.699999999999989px;width:300px;text-align:right;top:402.25px;font-size:7.7px;transform:scaleY(1.12);transform-origin:0 83.75%;color:#111">126,134</div>
<div class="t" style="font-family:'Liberation Serif',serif;left:51.25px;width:300px;text-align:right;top:402.25px;font-size:7.7px;transform:scaleY(1.12);transform-origin:0 83.75%;color:#111">39.3</div>
<div class="t" style="font-family:'Liberation Serif',serif;left:101px;width:300px;text-align:right;top:402.25px;font-size:7.7px;transform:scaleY(1.12);transform-origin:0 83.75%;color:#111">91,261</div>
<div class="t" style="font-family:'Liberation Serif',serif;left:137.7px;width:300px;text-align:right;top:402.25px;font-size:7.7px;transform:scaleY(1.12);transform-origin:0 83.75%;color:#111">28.4</div>
<div class="t" style="font-family:'Liberation Serif',serif;left:184px;width:300px;text-align:right;top:402.25px;font-size:7.7px;transform:scaleY(1.12);transform-origin:0 83.75%;color:#111">328,109</div>
<div class="t" style="font-family:'Liberation Serif',serif;left:219.5px;width:300px;text-align:right;top:402.25px;font-size:7.7px;transform:scaleY(1.12);transform-origin:0 83.75%;color:#111">102.2</div>
<div class="t" style="font-family:'Liberation Serif',serif;left:269px;width:300px;text-align:right;top:402.25px;font-size:7.7px;transform:scaleY(1.12);transform-origin:0 83.75%;color:#111">764,057</div>
<div class="t" style="font-family:'Liberation Serif',serif;left:304.6px;width:300px;text-align:right;top:402.25px;font-size:7.7px;transform:scaleY(1.12);transform-origin:0 83.75%;color:#111">238.1</div>
<div class="t" style="font-family:'Liberation Serif',serif;left:353.79999999999995px;width:300px;text-align:right;top:402.25px;font-size:7.7px;transform:scaleY(1.12);transform-origin:0 83.75%;color:#111">8,024,115</div>
<div class="t" style="font-family:'Liberation Serif',serif;left:394px;width:300px;text-align:right;top:402.25px;font-size:7.7px;transform:scaleY(1.12);transform-origin:0 83.75%;color:#111">2,500.5</div>
<div class="t" style="font-family:'Liberation Serif',serif;left:435.5px;width:300px;text-align:right;top:402.25px;font-size:7.7px;transform:scaleY(1.12);transform-origin:0 83.75%;color:#111">1,587,564</div>
<div class="t" style="font-family:'Liberation Serif',serif;left:476px;width:300px;text-align:right;top:402.25px;font-size:7.7px;transform:scaleY(1.12);transform-origin:0 83.75%;color:#111">494.7</div>
<div class="t" style="font-family:'Liberation Serif',serif;left:525.8px;width:300px;text-align:right;top:402.25px;font-size:7.7px;transform:scaleY(1.12);transform-origin:0 83.75%;color:#111">5,723,488</div>
<div class="t" style="font-family:'Liberation Serif',serif;left:566.6px;width:300px;text-align:right;top:402.25px;font-size:7.7px;transform:scaleY(1.12);transform-origin:0 83.75%;color:#111">1,783.6</div>
<div class="t" style="font-family:'Liberation Serif',serif;left:607px;width:300px;text-align:right;top:402.25px;font-size:7.7px;transform:scaleY(1.12);transform-origin:0 83.75%;color:#111">713,063</div>
<div class="t" style="font-family:'Liberation Serif',serif;left:639.2px;width:300px;text-align:right;top:402.25px;font-size:7.7px;transform:scaleY(1.12);transform-origin:0 83.75%;color:#111">222.2</div>
<div class="t" style="font-family:'Liberation Serif',serif;left:-115.5px;width:300px;text-align:center;top:412.25px;font-size:7.7px;transform:scaleY(1.12);transform-origin:0 83.75%;color:#111">2016</div>
<div class="t" style="font-family:'Liberation Serif',serif;left:-206.8px;width:300px;text-align:right;top:412.25px;font-size:7.7px;transform:scaleY(1.12);transform-origin:0 83.75%;color:#111">323,127,513</div>
<div class="t" style="font-family:'Liberation Serif',serif;left:-164px;width:300px;text-align:right;top:412.25px;font-size:7.7px;transform:scaleY(1.12);transform-origin:0 83.75%;color:#111">1,248,185</div>
<div class="t" style="font-family:'Liberation Serif',serif;left:-131px;width:300px;text-align:right;top:412.25px;font-size:7.7px;transform:scaleY(1.12);transform-origin:0 83.75%;color:#111">386.3</div>
<div class="t" style="font-family:'Liberation Serif',serif;left:-76.6px;width:300px;text-align:right;top:412.25px;font-size:7.7px;transform:scaleY(1.12);transform-origin:0 83.75%;color:#111">17,250</div>
<div class="t" style="font-family:'Liberation Serif',serif;left:-31.69999999999999px;width:300px;text-align:right;top:412.25px;font-size:7.7px;transform:scaleY(1.12);transform-origin:0 83.75%;color:#111">5.3</div>
<div class="t" style="font-family:'Liberation Serif',serif;left:15.699999999999989px;width:300px;text-align:right;top:412.25px;font-size:7.7px;transform:scaleY(1.12);transform-origin:0 83.75%;color:#111">130,603</div>
<div class="t" style="font-family:'Liberation Serif',serif;left:51.25px;width:300px;text-align:right;top:412.25px;font-size:7.7px;transform:scaleY(1.12);transform-origin:0 83.75%;color:#111">40.4</div>
<div class="t" style="font-family:'Liberation Serif',serif;left:101px;width:300px;text-align:right;top:412.25px;font-size:7.7px;transform:scaleY(1.12);transform-origin:0 83.75%;color:#111">95,730</div>
<div class="t" style="font-family:'Liberation Serif',serif;left:137.7px;width:300px;text-align:right;top:412.25px;font-size:7.7px;transform:scaleY(1.12);transform-origin:0 83.75%;color:#111">29.6</div>
<div class="t" style="font-family:'Liberation Serif',serif;left:184px;width:300px;text-align:right;top:412.25px;font-size:7.7px;transform:scaleY(1.12);transform-origin:0 83.75%;color:#111">332,198</div>
<div class="t" style="font-family:'Liberation Serif',serif;left:219.5px;width:300px;text-align:right;top:412.25px;font-size:7.7px;transform:scaleY(1.12);transform-origin:0 83.75%;color:#111">102.8</div>
<div class="t" style="font-family:'Liberation Serif',serif;left:269px;width:300px;text-align:right;top:412.25px;font-size:7.7px;transform:scaleY(1.12);transform-origin:0 83.75%;color:#111">803,007</div>
<div class="t" style="font-family:'Liberation Serif',serif;left:304.6px;width:300px;text-align:right;top:412.25px;font-size:7.7px;transform:scaleY(1.12);transform-origin:0 83.75%;color:#111">248.5</div>
<div class="t" style="font-family:'Liberation Serif',serif;left:353.79999999999995px;width:300px;text-align:right;top:412.25px;font-size:7.7px;transform:scaleY(1.12);transform-origin:0 83.75%;color:#111">7,919,035</div>
<div class="t" style="font-family:'Liberation Serif',serif;left:394px;width:300px;text-align:right;top:412.25px;font-size:7.7px;transform:scaleY(1.12);transform-origin:0 83.75%;color:#111">2,450.7</div>
<div class="t" style="font-family:'Liberation Serif',serif;left:435.5px;width:300px;text-align:right;top:412.25px;font-size:7.7px;transform:scaleY(1.12);transform-origin:0 83.75%;color:#111">1,515,096</div>
<div class="t" style="font-family:'Liberation Serif',serif;left:476px;width:300px;text-align:right;top:412.25px;font-size:7.7px;transform:scaleY(1.12);transform-origin:0 83.75%;color:#111">468.9</div>
<div class="t" style="font-family:'Liberation Serif',serif;left:525.8px;width:300px;text-align:right;top:412.25px;font-size:7.7px;transform:scaleY(1.12);transform-origin:0 83.75%;color:#111">5,638,455</div>
<div class="t" style="font-family:'Liberation Serif',serif;left:566.6px;width:300px;text-align:right;top:412.25px;font-size:7.7px;transform:scaleY(1.12);transform-origin:0 83.75%;color:#111">1,745.0</div>
<div class="t" style="font-family:'Liberation Serif',serif;left:607px;width:300px;text-align:right;top:412.25px;font-size:7.7px;transform:scaleY(1.12);transform-origin:0 83.75%;color:#111">765,484</div>
<div class="t" style="font-family:'Liberation Serif',serif;left:639.2px;width:300px;text-align:right;top:412.25px;font-size:7.7px;transform:scaleY(1.12);transform-origin:0 83.75%;color:#111">236.9</div>
<svg style="left:18px;top:249px" width="5" height="5"><path d="M0 0 H3.5 L0 3.5 Z" fill="#1d8a42"/></svg>
<svg style="left:18px;top:272px" width="5" height="5"><path d="M0 0 H3.5 L0 3.5 Z" fill="#1d8a42"/></svg>
<svg style="left:18px;top:283px" width="5" height="5"><path d="M0 0 H3.5 L0 3.5 Z" fill="#1d8a42"/></svg>
<svg style="left:18px;top:293px" width="5" height="5"><path d="M0 0 H3.5 L0 3.5 Z" fill="#1d8a42"/></svg>
<svg style="left:18px;top:304px" width="5" height="5"><path d="M0 0 H3.5 L0 3.5 Z" fill="#1d8a42"/></svg>
<svg style="left:18px;top:314px" width="5" height="5"><path d="M0 0 H3.5 L0 3.5 Z" fill="#1d8a42"/></svg>
<svg style="left:18px;top:325px" width="5" height="5"><path d="M0 0 H3.5 L0 3.5 Z" fill="#1d8a42"/></svg>
<svg style="left:18px;top:335px" width="5" height="5"><path d="M0 0 H3.5 L0 3.5 Z" fill="#1d8a42"/></svg>
<svg style="left:18px;top:346px" width="5" height="5"><path d="M0 0 H3.5 L0 3.5 Z" fill="#1d8a42"/></svg>
<svg style="left:18px;top:356px" width="5" height="5"><path d="M0 0 H3.5 L0 3.5 Z" fill="#1d8a42"/></svg>
<svg style="left:18px;top:367px" width="5" height="5"><path d="M0 0 H3.5 L0 3.5 Z" fill="#1d8a42"/></svg>
<svg style="left:18px;top:377px" width="5" height="5"><path d="M0 0 H3.5 L0 3.5 Z" fill="#1d8a42"/></svg>
<svg style="left:18px;top:388px" width="5" height="5"><path d="M0 0 H3.5 L0 3.5 Z" fill="#1d8a42"/></svg>
<svg style="left:18px;top:399px" width="5" height="5"><path d="M0 0 H3.5 L0 3.5 Z" fill="#1d8a42"/></svg>
<svg style="left:18px;top:411px" width="5" height="5"><path d="M0 0 H3.5 L0 3.5 Z" fill="#1d8a42"/></svg>
<div class="t" style="font-family:'Liberation Serif',serif;left:23px;top:425.36px;font-size:7.33px;transform:scaleY(1.12);transform-origin:0 83.75%;color:#111">Populations are U.S. Census Bureau provisional estimates as of July 1 for each year except 2000 and 2010, which are decennial census counts.</div>
<div class="t" style="font-family:'Liberation Serif',serif;left:19px;top:423.48px;font-size:5.4px;transform:scaleY(1.12);transform-origin:0 83.75%;color:#111">1</div>
<div class="t" style="font-family:'Liberation Serif',serif;left:23px;top:437.36px;font-size:7.33px;transform:scaleY(1.12);transform-origin:0 83.75%;color:#111">The violent crime figures include the offenses of murder, rape (legacy definition), robbery, and aggravated assault.</div>
<div class="t" style="font-family:'Liberation Serif',serif;left:19px;top:435.48px;font-size:5.4px;transform:scaleY(1.12);transform-origin:0 83.75%;color:#111">2</div>
<div class="t" style="font-family:'Liberation Serif',serif;left:23px;top:449.36px;font-size:7.33px;transform:scaleY(1.12);transform-origin:0 83.75%;color:#111">The figures shown in this column for the offense of rape were estimated using the revised Uniform Crime Reporting Program's (UCR) definition of rape. See data declaration for further explanation.</div>
<div class="t" style="font-family:'Liberation Serif',serif;left:19px;top:447.48px;font-size:5.4px;transform:scaleY(1.12);transform-origin:0 83.75%;color:#111">3</div>
<div class="t" style="font-family:'Liberation Serif',serif;left:23px;top:461.36px;font-size:7.33px;transform:scaleY(1.12);transform-origin:0 83.75%;color:#111">The figures shown in this column for the offense of rape were estimated using the legacy UCR definition of rape. See data declaration for further explanation.</div>
<div class="t" style="font-family:'Liberation Serif',serif;left:19px;top:459.48px;font-size:5.4px;transform:scaleY(1.12);transform-origin:0 83.75%;color:#111">4</div>
<div class="t" style="font-family:'Liberation Serif',serif;left:23px;top:473.36px;font-size:7.33px;transform:scaleY(1.12);transform-origin:0 83.75%;color:#111">The murder and nonnegligent homicides that occurred as a result of the events of September 11, 2001, are not included in this table.</div>
<div class="t" style="font-family:'Liberation Serif',serif;left:19px;top:471.48px;font-size:5.4px;transform:scaleY(1.12);transform-origin:0 83.75%;color:#111">5</div>
<div class="t" style="font-family:'Liberation Serif',serif;left:23px;top:485.36px;font-size:7.33px;transform:scaleY(1.12);transform-origin:0 83.75%;color:#111">The crime figures have been adjusted.</div>
<div class="t" style="font-family:'Liberation Serif',serif;left:19px;top:483.48px;font-size:5.4px;transform:scaleY(1.12);transform-origin:0 83.75%;color:#111">6</div>
<div class="t" style="font-family:'Liberation Serif',serif;left:19px;top:498.36px;font-size:7.33px;transform:scaleY(1.12);transform-origin:0 83.75%;color:#111">NOTE:&nbsp; Although arson data are included in the trend and clearance tables, sufficient data are not available to estimate totals for this offense. Therefore, no arson data are published in this table.</div>
</body></html>
